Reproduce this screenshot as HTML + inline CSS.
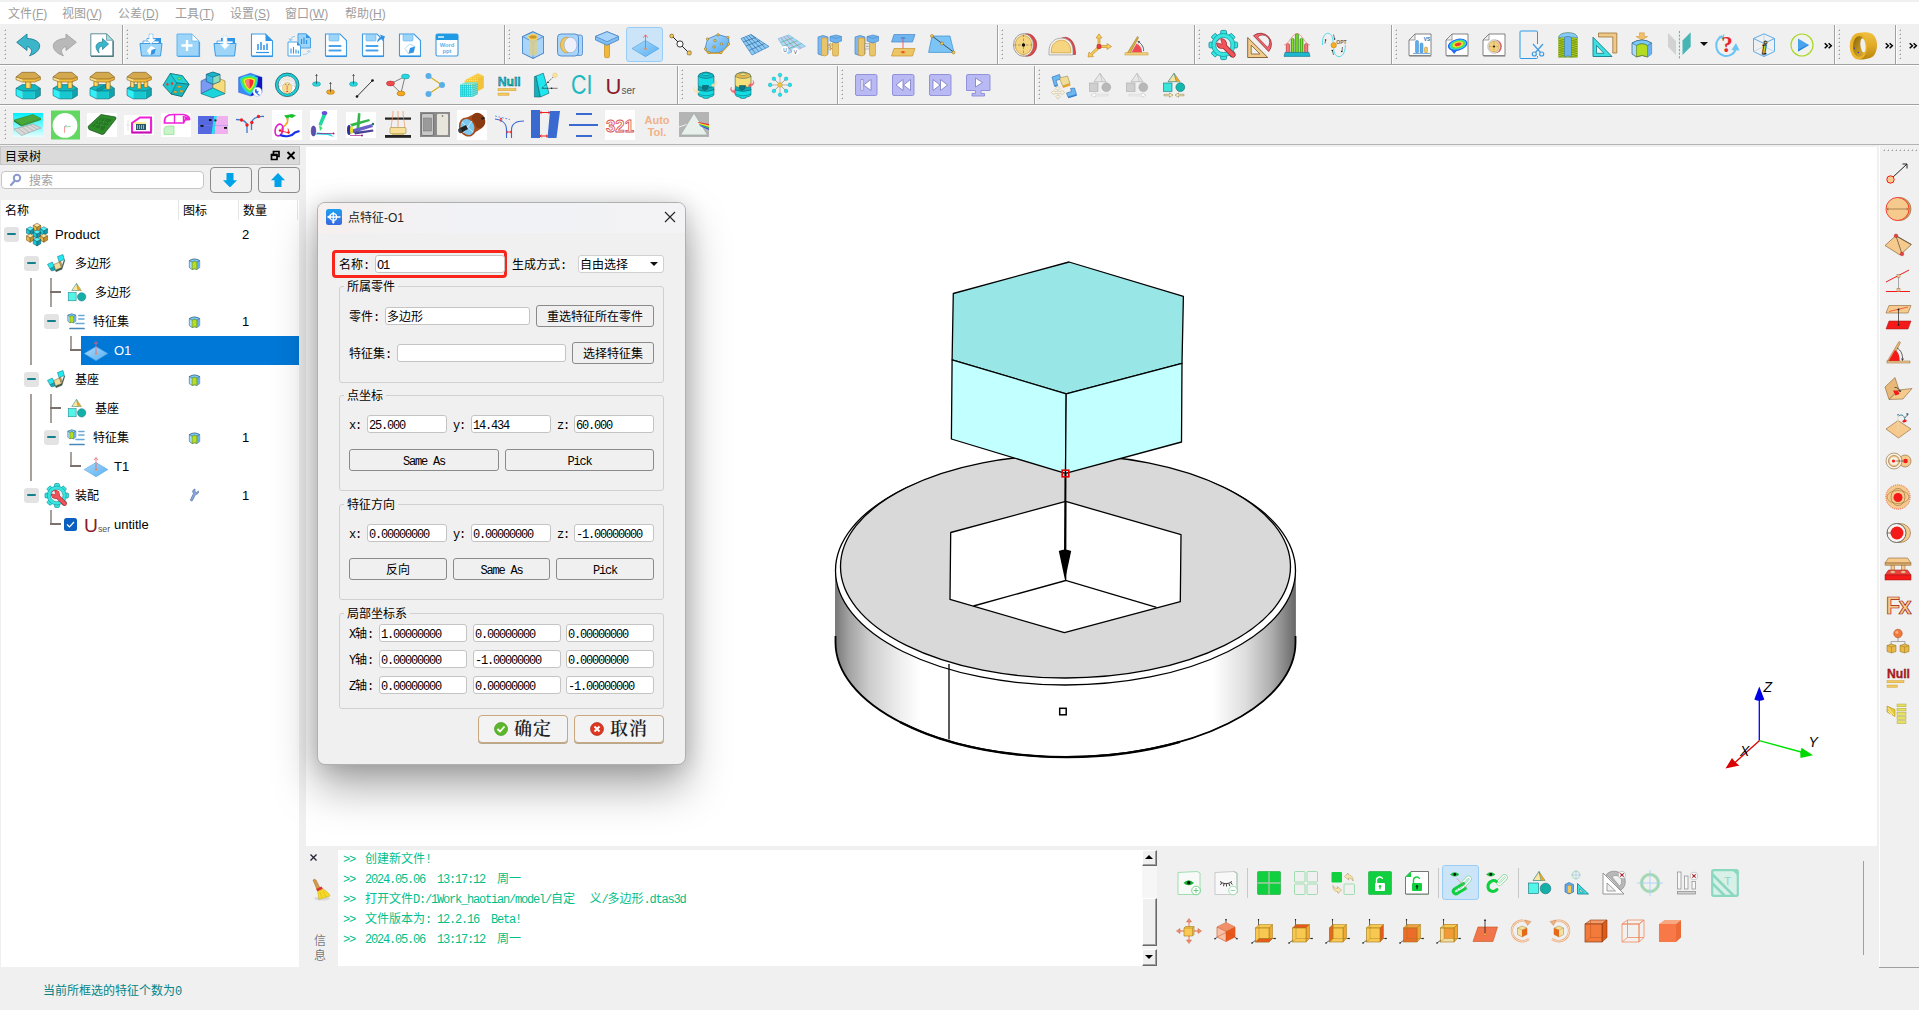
<!DOCTYPE html>
<html lang="zh"><head><meta charset="utf-8"><title>DTAS 3D</title>
<style>
*{box-sizing:border-box;margin:0;padding:0}
html,body{width:1919px;height:1010px;overflow:hidden}
body{background:#f0f0f0;font-family:"Liberation Sans","Noto Sans CJK SC",sans-serif;font-size:12px;color:#000;position:relative}
.abs{position:absolute}
.ui{font-family:"Liberation Sans","Noto Sans CJK SC",sans-serif;font-size:12px;line-height:16px;white-space:nowrap}
.ss{font-family:"Liberation Mono","Noto Sans CJK SC",monospace;font-size:12px;line-height:14px;white-space:nowrap;font-weight:400}
.ss b{font-weight:400;letter-spacing:-1.2px}
.hl{position:absolute;height:1px;left:0;width:1919px}
.ico{position:absolute;width:24px;height:24px;overflow:visible}
.inp{position:absolute;background:#fff;border:1px solid #c4c4c4;border-radius:3px;height:18px;padding:3px 0 0 1px;overflow:hidden}
.btn{position:absolute;background:#f0f0f0;border:1px solid #8a8a8a;border-radius:3px;text-align:center;height:22px;padding-top:5px}
.grp{position:absolute;border:1px solid #d0d0d0;border-radius:3px}
.grp>span{position:absolute;left:4px;top:-4px;line-height:10px;background:#f0f0f0;padding:0 3px}
.hd{position:absolute;width:3px}
.tb{position:absolute;width:15px;height:15px;border-radius:3px;background:#e3e3e3}
.tb:after{content:"";position:absolute;left:3px;top:6px;width:9px;height:2.4px;border-radius:1px;background:#14808c}
.tl{position:absolute;background:#a8a09c}
.th{position:absolute;background:#7c706c;height:2px}
</style></head><body>
<div class="abs" style="left:0;top:2px;width:1919px;height:22px;background:#fff"></div>
<div class="abs ui" style="left:8px;top:6px;color:#9d9d9d">文件(<u>F</u>)</div>
<div class="abs ui" style="left:62px;top:6px;color:#9d9d9d">视图(<u>V</u>)</div>
<div class="abs ui" style="left:118px;top:6px;color:#9d9d9d">公差(<u>D</u>)</div>
<div class="abs ui" style="left:175px;top:6px;color:#9d9d9d">工具(<u>T</u>)</div>
<div class="abs ui" style="left:230px;top:6px;color:#9d9d9d">设置(<u>S</u>)</div>
<div class="abs ui" style="left:285px;top:6px;color:#9d9d9d">窗口(<u>W</u>)</div>
<div class="abs ui" style="left:345px;top:6px;color:#9d9d9d">帮助(<u>H</u>)</div>
<div class="hl" style="top:64px;background:#a0a0a0"></div><div class="hl" style="top:65px;background:#fff"></div>
<div class="hl" style="top:104px;background:#a0a0a0"></div><div class="hl" style="top:105px;background:#fff"></div>
<div class="hl" style="top:144px;background:#b2b2b2"></div>
<i class="abs" style="left:5px;top:30px;width:1px;height:1px;background:#a0a0a0;box-shadow:-1px -1px 0 #fff,-1px 0 0 #cdcdcd,0 -1px 0 #cdcdcd"></i><i class="abs" style="left:5px;top:34px;width:1px;height:1px;background:#a0a0a0;box-shadow:-1px -1px 0 #fff,-1px 0 0 #cdcdcd,0 -1px 0 #cdcdcd"></i><i class="abs" style="left:5px;top:38px;width:1px;height:1px;background:#a0a0a0;box-shadow:-1px -1px 0 #fff,-1px 0 0 #cdcdcd,0 -1px 0 #cdcdcd"></i><i class="abs" style="left:5px;top:42px;width:1px;height:1px;background:#a0a0a0;box-shadow:-1px -1px 0 #fff,-1px 0 0 #cdcdcd,0 -1px 0 #cdcdcd"></i><i class="abs" style="left:5px;top:46px;width:1px;height:1px;background:#a0a0a0;box-shadow:-1px -1px 0 #fff,-1px 0 0 #cdcdcd,0 -1px 0 #cdcdcd"></i><i class="abs" style="left:5px;top:50px;width:1px;height:1px;background:#a0a0a0;box-shadow:-1px -1px 0 #fff,-1px 0 0 #cdcdcd,0 -1px 0 #cdcdcd"></i><i class="abs" style="left:5px;top:54px;width:1px;height:1px;background:#a0a0a0;box-shadow:-1px -1px 0 #fff,-1px 0 0 #cdcdcd,0 -1px 0 #cdcdcd"></i><i class="abs" style="left:5px;top:58px;width:1px;height:1px;background:#a0a0a0;box-shadow:-1px -1px 0 #fff,-1px 0 0 #cdcdcd,0 -1px 0 #cdcdcd"></i>
<svg class="ico" style="left:16px;top:33px;width:24px;height:24px" viewBox="0 0 24 24"><path d="M.7 9.3 L11 1 V5.500 C18 5.500 24 9 23.700 13 C23.500 17.500 19 21 13.500 22.800 C16.500 19 16.500 15.500 11 13.300 V17.500 Z" fill="#3ab5c9" stroke="#1f7f95" stroke-width=".9" stroke-linejoin="round"/></svg>
<svg class="ico" style="left:53px;top:33px;width:24px;height:24px" viewBox="0 0 24 24"><path d="M23.300 9.300 L13 1 V5.500 C6 5.500 0 9 .300 13 C.500 17.500 5 21 10.500 22.800 C7.500 19 7.500 15.500 13 13.300 V17.500 Z" fill="#b9b9b9" stroke="#a2a2a2" stroke-width=".9" stroke-linejoin="round"/></svg>
<svg class="ico" style="left:90px;top:33px;width:24px;height:24px" viewBox="0 0 24 24"><path d="M.8 .8 H16.500 L23 7.300 V23 H.8 Z" fill="#fff" stroke="#5d8d96" stroke-width="1"/><path d="M16.500 .8 V7.300 H23 Z" fill="#a5dfe4" stroke="#5d8d96" stroke-width=".7"/><path d="M23.200 8 V23.300 H1" fill="none" stroke="#4b7a83" stroke-width="1.200"/><path d="M18.500 11 L12.500 5.500 V9 C7 9 3 13 9 20 C8 15.500 9.500 13.300 12.500 13.300 V16.500 Z" fill="#3ab5c9" stroke="#1f7f95" stroke-width=".7"/></svg>
<div class="abs" style="left:122px;top:25px;width:1px;height:39px;background:#a0a0a0"></div><div class="abs" style="left:123px;top:25px;width:1px;height:39px;background:#fff"></div>
<i class="abs" style="left:127px;top:30px;width:1px;height:1px;background:#a0a0a0;box-shadow:-1px -1px 0 #fff,-1px 0 0 #cdcdcd,0 -1px 0 #cdcdcd"></i><i class="abs" style="left:127px;top:34px;width:1px;height:1px;background:#a0a0a0;box-shadow:-1px -1px 0 #fff,-1px 0 0 #cdcdcd,0 -1px 0 #cdcdcd"></i><i class="abs" style="left:127px;top:38px;width:1px;height:1px;background:#a0a0a0;box-shadow:-1px -1px 0 #fff,-1px 0 0 #cdcdcd,0 -1px 0 #cdcdcd"></i><i class="abs" style="left:127px;top:42px;width:1px;height:1px;background:#a0a0a0;box-shadow:-1px -1px 0 #fff,-1px 0 0 #cdcdcd,0 -1px 0 #cdcdcd"></i><i class="abs" style="left:127px;top:46px;width:1px;height:1px;background:#a0a0a0;box-shadow:-1px -1px 0 #fff,-1px 0 0 #cdcdcd,0 -1px 0 #cdcdcd"></i><i class="abs" style="left:127px;top:50px;width:1px;height:1px;background:#a0a0a0;box-shadow:-1px -1px 0 #fff,-1px 0 0 #cdcdcd,0 -1px 0 #cdcdcd"></i><i class="abs" style="left:127px;top:54px;width:1px;height:1px;background:#a0a0a0;box-shadow:-1px -1px 0 #fff,-1px 0 0 #cdcdcd,0 -1px 0 #cdcdcd"></i><i class="abs" style="left:127px;top:58px;width:1px;height:1px;background:#a0a0a0;box-shadow:-1px -1px 0 #fff,-1px 0 0 #cdcdcd,0 -1px 0 #cdcdcd"></i>
<svg class="ico" style="left:139px;top:33px;width:24px;height:24px" viewBox="0 0 24 24"><path d="M8 5 H22 V11 H8Z" fill="#2f93e6"/><path d="M4 8 H20 V13 H4Z" fill="#fff" stroke="#3d9be3" stroke-width=".8"/><path d="M1 10.5 H23 L21.5 23 H2.5 Z" fill="#9dd5f8" stroke="#3d9be3" stroke-width="1"/><path d="M10 1 H14 V6 H17 L12 11 L7 6 H10Z" fill="#fff" stroke="#7fc3f0" stroke-width=".7"/><path d="M12 13 L17 15.5 L15.5 21 L10.5 22 L8 17.5Z" fill="#fff"/><path d="M12.5 17 L17 15.5 L15.5 21 L11.5 22Z" fill="#2f93e6"/></svg>
<svg class="ico" style="left:176px;top:33px;width:24px;height:24px" viewBox="0 0 24 24"><path d="M1 1 H16 L23 8 V23 H1Z" fill="#9dd5f8" stroke="#62b4ef" stroke-width="1"/><path d="M16 1 V8 H23Z" fill="#fff" stroke="#62b4ef" stroke-width=".7"/><path d="M2 23.5 H23.5 V9" fill="none" stroke="#4aa6ec" stroke-width="1.2"/><path d="M11 7 V18 M5.5 12.5 H16.5" stroke="#fff" stroke-width="2.4"/></svg>
<svg class="ico" style="left:213px;top:33px;width:24px;height:24px" viewBox="0 0 24 24"><path d="M8 5 H22 V11 H8Z" fill="#2f93e6"/><path d="M4 8 H20 V13 H4Z" fill="#fff" stroke="#3d9be3" stroke-width=".8"/><path d="M1 10.5 H23 L21.5 23 H2.5 Z" fill="#9dd5f8" stroke="#3d9be3" stroke-width="1"/><path d="M10 3 H14 V11 H17 L12 16.5 L7 11 H10Z" fill="#fff" stroke="#bfe2fa" stroke-width=".7"/></svg>
<svg class="ico" style="left:250px;top:33px;width:24px;height:24px" viewBox="0 0 24 24"><path d="M1.5 1 H15.5 L22.5 8 V23 H1.5Z" fill="#fff" stroke="#3d9be3" stroke-width="1.1"/><path d="M15.5 1 V8 H22.5Z" fill="#2f93e6"/><path d="M2 23.4 H22.8" stroke="#2f93e6" stroke-width="1.3"/><path d="M8 11 V17 M11 9 V17 M14 12 V17 M17 10.5 V17" stroke="#2f93e6" stroke-width="1.5"/><path d="M6 19.5 H19" stroke="#2f93e6" stroke-width="1.2"/></svg>
<svg class="ico" style="left:287px;top:33px;width:24px;height:24px" viewBox="0 0 24 24"><path d="M11 .8 H19 L23.5 5 V15 H11Z" fill="#9dd5f8" stroke="#3d9be3" stroke-width=".9"/><path d="M19 .8 V5 H23.5Z" fill="#2f93e6"/><path d="M14.5 6 V11 M17 4.5 V11 M19.5 7 V11" stroke="#2f93e6" stroke-width="1.2"/><path d="M1 9 H10 L13.5 12.5 V23 H1Z" fill="#fff" stroke="#3d9be3" stroke-width=".9"/><path d="M10 9 V12.5 H13.5Z" fill="#2f93e6"/><path d="M4 15.5 V20.5 M6.500 14 V20.5 M9 16.5 V20.5 M11.3 17.500 V20.5" stroke="#2f93e6" stroke-width="1.1"/><path d="M8 3.500 C5 3.500 3.500 5 3.500 7.500 M2 5.500 L3.500 8 L5.500 6" fill="none" stroke="#7fc0f0" stroke-width=".9"/><path d="M16 21.500 C20 21.500 22 20 22 18 M23.500 19.500 L22 17.300 L20 19" fill="none" stroke="#9ccdf2" stroke-width=".9"/></svg>
<svg class="ico" style="left:324px;top:33px;width:24px;height:24px" viewBox="0 0 24 24"><path d="M1.5 1 H16 L22.5 7.5 V23 H1.5Z" fill="#fff" stroke="#3d9be3" stroke-width="1.1"/><path d="M5 1.5 H15 V7 Q15 8 14 8 H6 Q5 8 5 7Z" fill="#9dd5f8" stroke="#5eb0ee" stroke-width=".6"/><path d="M2 23.4 H22.8" stroke="#2f93e6" stroke-width="1.3"/><path d="M5.500 13 H16.500 M5.500 17.500 H16.500" stroke="#4aa3ea" stroke-width="2.200" stroke-linecap="round"/></svg>
<svg class="ico" style="left:361px;top:33px;width:24px;height:24px" viewBox="0 0 24 24"><path d="M1.5 1 H16 L22.5 7.5 V23 H1.5Z" fill="#fff" stroke="#3d9be3" stroke-width="1.1"/><path d="M5 1.5 H15 V7 Q15 8 14 8 H6 Q5 8 5 7Z" fill="#9dd5f8" stroke="#5eb0ee" stroke-width=".6"/><path d="M2 23.4 H22.8" stroke="#2f93e6" stroke-width="1.3"/><path d="M5.500 13 H16.500 M5.500 17.500 H16.500" stroke="#4aa3ea" stroke-width="2.200" stroke-linecap="round"/><path d="M16 9.500 C16.500 6 18 4.500 20 4 L19 1.500 L24 3.500 L22 8.500 L21 6 C19 6.500 17.500 8 16 9.500Z" fill="#2f93e6"/></svg>
<svg class="ico" style="left:398px;top:33px;width:24px;height:24px" viewBox="0 0 24 24"><path d="M1.5 1 H16 L22.5 7.5 V23 H1.5Z" fill="#fff" stroke="#3d9be3" stroke-width="1.1"/><path d="M5 1.5 H15 V7 Q15 8 14 8 H6 Q5 8 5 7Z" fill="#9dd5f8" stroke="#5eb0ee" stroke-width=".6"/><path d="M2 23.4 H22.8" stroke="#2f93e6" stroke-width="1.3"/><path d="M11.500 11 L17 13.500 L15.500 19.500 L10 20.500 L7 15.500Z" fill="#fff" stroke="#6bb6ee" stroke-width=".5"/><path d="M12 15 L17 13.500 L15.500 19.500 L10.500 20.500Z" fill="#2f93e6"/></svg>
<svg class="ico" style="left:435px;top:33px;width:24px;height:24px" viewBox="0 0 24 24"><rect x="1" y="1" width="22" height="22" rx="1.5" fill="#fff" stroke="#3d9be3" stroke-width="1.1"/><path d="M1 2.5 Q1 1 2.5 1 H21.500 Q23 1 23 2.500 V7 H1Z" fill="#1f9be3"/><path d="M3 4 H9" stroke="#fff" stroke-width="1.300"/><text x="12" y="13.500" font-family="Liberation Sans,sans-serif" font-size="5.800" font-weight="bold" fill="#5db2ee" text-anchor="middle">Word</text><text x="12" y="19.500" font-family="Liberation Sans,sans-serif" font-size="5.800" font-weight="bold" fill="#5db2ee" text-anchor="middle">ppt</text></svg>
<div class="abs" style="left:504px;top:25px;width:1px;height:39px;background:#a0a0a0"></div><div class="abs" style="left:505px;top:25px;width:1px;height:39px;background:#fff"></div>
<i class="abs" style="left:509px;top:30px;width:1px;height:1px;background:#a0a0a0;box-shadow:-1px -1px 0 #fff,-1px 0 0 #cdcdcd,0 -1px 0 #cdcdcd"></i><i class="abs" style="left:509px;top:34px;width:1px;height:1px;background:#a0a0a0;box-shadow:-1px -1px 0 #fff,-1px 0 0 #cdcdcd,0 -1px 0 #cdcdcd"></i><i class="abs" style="left:509px;top:38px;width:1px;height:1px;background:#a0a0a0;box-shadow:-1px -1px 0 #fff,-1px 0 0 #cdcdcd,0 -1px 0 #cdcdcd"></i><i class="abs" style="left:509px;top:42px;width:1px;height:1px;background:#a0a0a0;box-shadow:-1px -1px 0 #fff,-1px 0 0 #cdcdcd,0 -1px 0 #cdcdcd"></i><i class="abs" style="left:509px;top:46px;width:1px;height:1px;background:#a0a0a0;box-shadow:-1px -1px 0 #fff,-1px 0 0 #cdcdcd,0 -1px 0 #cdcdcd"></i><i class="abs" style="left:509px;top:50px;width:1px;height:1px;background:#a0a0a0;box-shadow:-1px -1px 0 #fff,-1px 0 0 #cdcdcd,0 -1px 0 #cdcdcd"></i><i class="abs" style="left:509px;top:54px;width:1px;height:1px;background:#a0a0a0;box-shadow:-1px -1px 0 #fff,-1px 0 0 #cdcdcd,0 -1px 0 #cdcdcd"></i><i class="abs" style="left:509px;top:58px;width:1px;height:1px;background:#a0a0a0;box-shadow:-1px -1px 0 #fff,-1px 0 0 #cdcdcd,0 -1px 0 #cdcdcd"></i>
<div class="abs" style="left:626px;top:27px;width:37px;height:35px;background:#cce4f7;border:1px solid #99cdf5;border-radius:3px"></div>
<svg class="ico" style="left:521px;top:33px;width:24px;height:24px" viewBox="0 0 24 24"><g transform="translate(0 -2.300) scale(1 1.180)"><path d="M12 .8 L22.500 5 V19 L12 23.500 L1.500 19 V5Z" fill="#a9d5fa" stroke="#4a86c8" stroke-width=".9"/><path d="M1.500 5 L12 9.500 L22.500 5 M12 9.500 V23.500" fill="none" stroke="#4a86c8" stroke-width=".7"/><path d="M8 5.500 V20 Q12 22.500 16 20 V5.500Z" fill="#d9cf8e" opacity=".85"/><ellipse cx="12" cy="5.300" rx="4.300" ry="2.100" fill="#c99a2a" stroke="#f2d061" stroke-width="1.300"/></g></svg>
<svg class="ico" style="left:558px;top:33px;width:24px;height:24px" viewBox="0 0 24 24"><rect x="18" y="2" width="6.500" height="20.500" rx="2" fill="#a9d5fa" stroke="#4a86c8" stroke-width=".8"/><rect x="-.500" y="1" width="21" height="22" rx="3.500" fill="#a9d5fa" stroke="#4a86c8" stroke-width=".9"/><ellipse cx="8.500" cy="12" rx="6" ry="7.800" fill="#f3c95c" stroke="#c8922a" stroke-width=".7"/><ellipse cx="12.500" cy="12" rx="6.500" ry="7.800" fill="#eef1fb" stroke="#8aa0c8" stroke-width=".6"/></svg>
<svg class="ico" style="left:595px;top:33px;width:24px;height:24px" viewBox="0 0 24 24"><g transform="translate(0 -2.500) scale(1 1.180)"><rect x="9.500" y="10" width="5" height="13" rx="1.200" fill="#f0b93a" stroke="#c8922a" stroke-width=".7"/><path d="M12 1 L23.500 5 V8 L12 12.500 L.500 8 V5Z" fill="#7fbdf2" stroke="#4a86c8" stroke-width=".8"/><path d="M12 1 L23.500 5 L12 9.500 L.500 5Z" fill="#a9d5fa" stroke="#4a86c8" stroke-width=".7"/></g></svg>
<svg class="ico" style="left:632px;top:33px;width:24px;height:24px" viewBox="0 0 24 24"><defs><linearGradient id="gp" x1="0" y1="0" x2="1" y2="1"><stop offset="0" stop-color="#a9d9fa"/><stop offset="1" stop-color="#58b0f2"/></linearGradient></defs><path d="M13.500 7.500 L27 15.500 L13.500 23.700 L0 15.500Z" fill="url(#gp)" stroke="#4a9ee0" stroke-width=".6"/><path d="M13.500 15.500 V2 M11.300 4.600 L13.500 1.800 L15.700 4.600" fill="none" stroke="#f0606c" stroke-width=".9"/><ellipse cx="13.500" cy="15.700" rx="1.400" ry="1" fill="#ee8a5a"/></svg>
<svg class="ico" style="left:669px;top:33px;width:24px;height:24px" viewBox="0 0 24 24"><path d="M2.500 2.500 L20.500 20.500" stroke="#222" stroke-width="1"/><circle cx="11" cy="11" r="3.100" fill="#fff" stroke="#222" stroke-width=".9"/><circle cx="2.700" cy="3" r="1.900" fill="#f3c95c" stroke="#6b4d10" stroke-width=".6"/><rect x="18.300" y="18" width="3.800" height="3.800" rx=".8" fill="#f3c95c" stroke="#6b4d10" stroke-width=".6"/></svg>
<svg class="ico" style="left:706px;top:33px;width:24px;height:24px" viewBox="0 0 24 24"><defs><linearGradient id="gq" x1="0" y1="0" x2="1" y2="1"><stop offset="0" stop-color="#b5dcfa"/><stop offset="1" stop-color="#4fa9ef"/></linearGradient></defs><path d="M-1 16 L1.500 6 L12 1.500 L22.500 4.500 L23 11 L15 19.500 L2 19.500Z" fill="url(#gq)" stroke="#3a7fc0" stroke-width=".8"/><path d="M-1 16 L2 19.500 L15 19.500 L23 11 V12.500 L15 21 L2 21 L-1 17.500Z" fill="#d8a83a"/><g fill="#f3c95c" stroke="#8a6414" stroke-width=".5"><circle cx="-.5" cy="16" r="1.200"/><circle cx="1.500" cy="6" r="1.200"/><circle cx="12" cy="1.800" r="1.200"/><circle cx="22" cy="4.500" r="1.200"/><circle cx="22.500" cy="11" r="1.200"/><circle cx="15" cy="19.500" r="1.200"/><circle cx="3" cy="19.500" r="1.200"/><circle cx="9" cy="7.500" r="1.200"/><circle cx="15.500" cy="11" r="1.200"/><circle cx="8" cy="14" r="1.200"/></g></svg>
<svg class="ico" style="left:743px;top:33px;width:24px;height:24px" viewBox="0 0 24 24"><path d="M-2 5.500 L8 1.500 L26 13.500 L9 22Z" fill="#8ccbf6" stroke="#3a7fc0" stroke-width=".7"/><path d="M.500 4.500 L12.400 20.300 M3 3.500 L15.800 18.600 M5.500 2.500 L19.200 16.900 M8 1.500 L22.600 15.200 M.200 9 L12.500 4.500 M2.900 13 L17 7.500 M6 17.500 L21.500 10.500" fill="none" stroke="#2a5a8e" stroke-width=".6"/></svg>
<svg class="ico" style="left:780px;top:33px;width:24px;height:24px" viewBox="0 0 24 24"><path d="M-2 5.800 L8.800 1.800 L25.700 13.300 L8 20.700Z" fill="#a9d9f8" stroke="#6aaee0" stroke-width=".5"/><path d="M1 4.700 L12 19 M4 3.600 L16.500 17.200 M6.500 2.700 L21 15.300" fill="none" stroke="#d85a6a" stroke-width=".5"/><path d="M.500 9.500 L13 4.700 M3 13.300 L17.500 7.700 M5.500 17 L21.500 10.500" fill="none" stroke="#3aa860" stroke-width=".5"/><circle cx="5" cy="16.500" r="3.400" fill="#fff"/><circle cx="15.500" cy="18.500" r="3.400" fill="#fff"/><text x="5" y="18.500" font-size="5" font-family="Liberation Sans,sans-serif" text-anchor="middle" fill="#444">U</text><text x="15.500" y="20.500" font-size="5" font-family="Liberation Sans,sans-serif" text-anchor="middle" fill="#444">V</text></svg>
<svg class="ico" style="left:817px;top:33px;width:24px;height:24px" viewBox="0 0 24 24"><path d="M1 4 Q6 1 11 4 V21 Q6 24 1 21Z" fill="#7db8ee" stroke="#4a86c8" stroke-width=".7"/><path d="M4.500 5.500 Q7.500 4 10.500 5.500 V22 Q7.500 24 4.500 22Z" fill="#e8c46a" stroke="#c8922a" stroke-width=".6"/><rect x="15.500" y="9" width="6" height="14" rx="1.500" fill="#e8c46a" stroke="#c8922a" stroke-width=".6"/><path d="M13 3.500 L19 2 L24.500 3.500 V8 L19 10 L13 8Z" fill="#6fb4ee" stroke="#4a86c8" stroke-width=".7"/><path d="M13 3.500 L19 5.500 L24.500 3.500" fill="none" stroke="#4a86c8" stroke-width=".6"/><path d="M11 12 H15 M11 15.500 H15" stroke="#c89a50" stroke-width="1.400"/><path d="M13 10 L16 12 L13 14Z M13.500 13.500 L10.500 15.500 L13.500 17.500Z" fill="#f1d9a0" stroke="#a37a30" stroke-width=".4"/></svg>
<svg class="ico" style="left:854px;top:33px;width:24px;height:24px" viewBox="0 0 24 24"><path d="M1 4 Q6 1 11 4 V21 Q6 24 1 21Z" fill="#7db8ee" stroke="#4a86c8" stroke-width=".7"/><path d="M4.500 5.500 Q7.500 4 10.500 5.500 V22 Q7.500 24 4.500 22Z" fill="#e8c46a" stroke="#c8922a" stroke-width=".6"/><rect x="15.500" y="9" width="6" height="14" rx="1.500" fill="#e8c46a" stroke="#c8922a" stroke-width=".6"/><path d="M13 3.500 L19 2 L24.500 3.500 V8 L19 10 L13 8Z" fill="#6fb4ee" stroke="#4a86c8" stroke-width=".7"/><path d="M13 3.500 L19 5.500 L24.500 3.500" fill="none" stroke="#4a86c8" stroke-width=".6"/><rect x="11" y="10.500" width="4.500" height="5.500" fill="#e8e8e8" stroke="#8a8a8a" stroke-width=".5"/><path d="M12 13.300 H14.500" stroke="#666" stroke-width=".6"/></svg>
<svg class="ico" style="left:891px;top:33px;width:24px;height:24px" viewBox="0 0 24 24"><path d="M3 1.500 H24 L21.500 9 H.500Z" fill="#6fb6f0" stroke="#4a86c8" stroke-width=".7"/><ellipse cx="12" cy="5" rx="2.500" ry="1.100" fill="#4a8fd8"/><path d="M12 5.500 V19" stroke="#ef5561" stroke-width=".9"/><path d="M3 15.500 H24 L21.500 23 H.500Z" fill="#ecc565" stroke="#c8922a" stroke-width=".7"/><ellipse cx="12" cy="19.300" rx="2.600" ry="1.200" fill="#ef8a3a"/><circle cx="12" cy="19" r=".9" fill="#e23a3a"/></svg>
<svg class="ico" style="left:928px;top:33px;width:24px;height:24px" viewBox="0 0 24 24"><path d="M4 3 H22 L26 19.400 H.600Z" fill="#7cc4f5" stroke="#3a8fd0" stroke-width=".7"/><path d="M4 3 L25.500 19" stroke="#333" stroke-width=".8"/><g fill="#f3c95c" stroke="#8a6414" stroke-width=".5"><circle cx="4" cy="3" r="1.500"/><circle cx="14" cy="10.500" r="1.500"/><circle cx="25.500" cy="19.400" r="1.500"/></g></svg>
<div class="abs" style="left:997px;top:25px;width:1px;height:39px;background:#a0a0a0"></div><div class="abs" style="left:998px;top:25px;width:1px;height:39px;background:#fff"></div>
<i class="abs" style="left:1002px;top:30px;width:1px;height:1px;background:#a0a0a0;box-shadow:-1px -1px 0 #fff,-1px 0 0 #cdcdcd,0 -1px 0 #cdcdcd"></i><i class="abs" style="left:1002px;top:34px;width:1px;height:1px;background:#a0a0a0;box-shadow:-1px -1px 0 #fff,-1px 0 0 #cdcdcd,0 -1px 0 #cdcdcd"></i><i class="abs" style="left:1002px;top:38px;width:1px;height:1px;background:#a0a0a0;box-shadow:-1px -1px 0 #fff,-1px 0 0 #cdcdcd,0 -1px 0 #cdcdcd"></i><i class="abs" style="left:1002px;top:42px;width:1px;height:1px;background:#a0a0a0;box-shadow:-1px -1px 0 #fff,-1px 0 0 #cdcdcd,0 -1px 0 #cdcdcd"></i><i class="abs" style="left:1002px;top:46px;width:1px;height:1px;background:#a0a0a0;box-shadow:-1px -1px 0 #fff,-1px 0 0 #cdcdcd,0 -1px 0 #cdcdcd"></i><i class="abs" style="left:1002px;top:50px;width:1px;height:1px;background:#a0a0a0;box-shadow:-1px -1px 0 #fff,-1px 0 0 #cdcdcd,0 -1px 0 #cdcdcd"></i><i class="abs" style="left:1002px;top:54px;width:1px;height:1px;background:#a0a0a0;box-shadow:-1px -1px 0 #fff,-1px 0 0 #cdcdcd,0 -1px 0 #cdcdcd"></i><i class="abs" style="left:1002px;top:58px;width:1px;height:1px;background:#a0a0a0;box-shadow:-1px -1px 0 #fff,-1px 0 0 #cdcdcd,0 -1px 0 #cdcdcd"></i>
<svg class="ico" style="left:1013px;top:33px;width:24px;height:24px" viewBox="0 0 24 24"><ellipse cx="14" cy="12" rx="9.700" ry="11.300" fill="#e0464a" stroke="#9a2428" stroke-width=".6"/><ellipse cx="10.500" cy="12" rx="10" ry="11.300" fill="#f7f2e6" stroke="#777" stroke-width=".7"/><ellipse cx="10.500" cy="12" rx="8.300" ry="9.500" fill="#f5d580" stroke="#c8922a" stroke-width=".7"/><path d="M10.500 1.500 V22.500 M1 12 H20" stroke="#8a6a20" stroke-width=".6" stroke-dasharray="2.500 1.500"/><circle cx="10.500" cy="12" r="1.700" fill="#111"/></svg>
<svg class="ico" style="left:1050px;top:33px;width:24px;height:24px" viewBox="0 0 24 24"><g transform="translate(0 3) scale(1 .840)"><path d="M5 22 V15 C5 5 12 1.500 16 1.500 C22 3 25.500 10 25.500 22Z" fill="#e0464a" stroke="#9a2428" stroke-width=".6"/><path d="M-1 22.500 V18 C-1 8 5 2.500 11.500 2.500 C18 2.500 23 8 23 18 V22.500Z" fill="#f7f4ee" stroke="#8a8a8a" stroke-width=".7"/><path d="M1.200 20 V18 C1.200 10 6 5 11.500 5 C17 5 20.800 10 20.800 18 V20Z" fill="#f5d580" stroke="#c8922a" stroke-width=".7"/></g></svg>
<svg class="ico" style="left:1087px;top:33px;width:24px;height:24px" viewBox="0 0 24 24"><path d="M11 13.500 V5 H9 L12 .800 L15 5 H13 V12.500 L20 12.500 V10.500 L24.500 13.500 L20 16.500 V14.500 H13.500 L5 22 L6.500 23.500 L1 24 L2 19 L3.500 20.500Z" fill="#f3c95c" stroke="#c8922a" stroke-width=".7" stroke-linejoin="round"/><rect x="10" y="11.500" width="4" height="4" rx=".8" fill="#ee3a44" stroke="#a01c24" stroke-width=".5"/></svg>
<svg class="ico" style="left:1124px;top:33px;width:24px;height:24px" viewBox="0 0 24 24"><path d="M3 20.500 L13.500 3.500 L14.500 4.500 L6 20.500Z" fill="#d9b23a" stroke="#8a6a14" stroke-width=".5"/><path d="M7.500 19.500 L12.500 10.500 C16 12 18 15 18 19.500Z" fill="#f04a54"/><path d="M14 8.500 C18 11 20 14.500 19.500 18 M13.500 8.300 L15.500 8.500 L14.500 10.300" fill="none" stroke="#222" stroke-width=".7"/><rect x="1" y="19.800" width="23" height="2.200" fill="#f3d27a" stroke="#c8922a" stroke-width=".5"/></svg>
<div class="abs" style="left:1194px;top:25px;width:1px;height:39px;background:#a0a0a0"></div><div class="abs" style="left:1195px;top:25px;width:1px;height:39px;background:#fff"></div>
<i class="abs" style="left:1199px;top:30px;width:1px;height:1px;background:#a0a0a0;box-shadow:-1px -1px 0 #fff,-1px 0 0 #cdcdcd,0 -1px 0 #cdcdcd"></i><i class="abs" style="left:1199px;top:34px;width:1px;height:1px;background:#a0a0a0;box-shadow:-1px -1px 0 #fff,-1px 0 0 #cdcdcd,0 -1px 0 #cdcdcd"></i><i class="abs" style="left:1199px;top:38px;width:1px;height:1px;background:#a0a0a0;box-shadow:-1px -1px 0 #fff,-1px 0 0 #cdcdcd,0 -1px 0 #cdcdcd"></i><i class="abs" style="left:1199px;top:42px;width:1px;height:1px;background:#a0a0a0;box-shadow:-1px -1px 0 #fff,-1px 0 0 #cdcdcd,0 -1px 0 #cdcdcd"></i><i class="abs" style="left:1199px;top:46px;width:1px;height:1px;background:#a0a0a0;box-shadow:-1px -1px 0 #fff,-1px 0 0 #cdcdcd,0 -1px 0 #cdcdcd"></i><i class="abs" style="left:1199px;top:50px;width:1px;height:1px;background:#a0a0a0;box-shadow:-1px -1px 0 #fff,-1px 0 0 #cdcdcd,0 -1px 0 #cdcdcd"></i><i class="abs" style="left:1199px;top:54px;width:1px;height:1px;background:#a0a0a0;box-shadow:-1px -1px 0 #fff,-1px 0 0 #cdcdcd,0 -1px 0 #cdcdcd"></i><i class="abs" style="left:1199px;top:58px;width:1px;height:1px;background:#a0a0a0;box-shadow:-1px -1px 0 #fff,-1px 0 0 #cdcdcd,0 -1px 0 #cdcdcd"></i>
<svg class="ico" style="left:1209px;top:31px;width:28px;height:28px" viewBox="0 0 24 24"><g fill="#38e6e0" stroke="#0f8e9a" stroke-width=".7"><rect x="10" y="-.5" width="5" height="5" rx="1"/><rect x="10" y="19.500" width="5" height="5" rx="1"/><rect x="0" y="9.500" width="5" height="5" rx="1"/><rect x="19.500" y="9.500" width="5" height="5" rx="1"/><rect x="2.800" y="2.800" width="5" height="5" rx="1" transform="rotate(45 5.300 5.300)"/><rect x="16.500" y="2.800" width="5" height="5" rx="1" transform="rotate(45 19 5.300)"/><rect x="2.800" y="16.500" width="5" height="5" rx="1" transform="rotate(45 5.300 19)"/><rect x="16.500" y="16.500" width="5" height="5" rx="1" transform="rotate(45 19 19)"/></g><circle cx="12.300" cy="12" r="8.200" fill="#f0f0f0" stroke="#38e6e0" stroke-width="3.400"/><circle cx="12.300" cy="12" r="9.900" fill="none" stroke="#0f8e9a" stroke-width=".6"/><circle cx="12.300" cy="12" r="6.500" fill="none" stroke="#0f8e9a" stroke-width=".6"/><path d="M13 13 L20.500 20.500" stroke="#a01c24" stroke-width="4.600" stroke-linecap="round"/><circle cx="10.800" cy="10.800" r="4.500" fill="#a01c24"/><path d="M13 13 L20.500 20.500" stroke="#f0545a" stroke-width="3.500" stroke-linecap="round"/><circle cx="10.800" cy="10.800" r="3.900" fill="#f0545a"/><path d="M11.300 11.300 L6.200 10 L9.800 6.400Z" fill="#f0f0f0"/><path d="M6.800 10.200 L11.300 11.300 L10 6.800" fill="none" stroke="#a01c24" stroke-width=".5"/></svg>
<svg class="ico" style="left:1247px;top:33px;width:24px;height:24px" viewBox="0 0 24 24"><path d="M6.500 2.700 A11 11 0 0 1 21.700 18.500Z" fill="#f8646a" stroke="#7a1c24" stroke-width=".7" stroke-linejoin="round"/><path d="M10.500 4 A7.200 7.200 0 0 1 20.500 14.400Z" fill="#f0f0f0" stroke="#7a1c24" stroke-width=".6" stroke-linejoin="round"/><path d="M.700 4.500 L20.800 24.500 H.700Z" fill="#f3cc8c" stroke="#6a4a1c" stroke-width=".8" stroke-linejoin="round"/><path d="M4.200 12.200 L13 21 H4.200Z" fill="#f0f0f0" stroke="#6a4a1c" stroke-width=".7"/></svg>
<svg class="ico" style="left:1284px;top:33px;width:24px;height:24px" viewBox="0 0 24 24"><path d="M0 12 C5 11.500 8 .500 13 .500 C18 .500 21 11.500 26 12" fill="none" stroke="#f06a6a" stroke-width=".6"/><defs><linearGradient id="hg" x1="0" y1="0" x2="1" y2="0"><stop offset="0" stop-color="#3aa818"/><stop offset=".5" stop-color="#8ae02a"/><stop offset="1" stop-color="#3aa818"/></linearGradient><linearGradient id="hr" x1="0" y1="0" x2="1" y2="0"><stop offset="0" stop-color="#e84a4a"/><stop offset=".5" stop-color="#f88a8a"/><stop offset="1" stop-color="#e84a4a"/></linearGradient></defs><g stroke-width=".4"><rect x="2.200" y="10.500" width="3.400" height="10.500" rx="1.500" fill="url(#hr)" stroke="#a02a2a"/><rect x="7" y="5.300" width="3.200" height="15.500" rx="1.500" fill="url(#hg)" stroke="#2a7a14"/><rect x="11.300" y=".700" width="3.300" height="20" rx="1.500" fill="url(#hg)" stroke="#2a7a14"/><rect x="15.900" y="5.300" width="3.200" height="15.500" rx="1.500" fill="url(#hg)" stroke="#2a7a14"/><rect x="20.500" y="10.500" width="3.400" height="10.500" rx="1.500" fill="url(#hr)" stroke="#a02a2a"/></g><path d="M1 19.400 H25 L26 23.400 H0Z" fill="#1cb8d0" stroke="#0f6e8a" stroke-width=".6"/></svg>
<svg class="ico" style="left:1321px;top:33px;width:24px;height:24px" viewBox="0 0 24 24"><path d="M12 9 C12 3 9.500 .300 6.700 .300 C3 .300 1 6 1.500 12 M12.600 15.500 C13 21 15.500 23.700 18 23.700 C22 23.700 24.600 18 24.300 12" fill="none" stroke="#4adcec" stroke-width="1"/><circle cx="12.700" cy="12.200" r="2.700" fill="#f5b020" stroke="#b87a10" stroke-width=".5"/><text x="15.300" y="11.300" font-size="5" font-family="Liberation Sans,sans-serif" font-weight="bold" fill="#666">OPT</text><path d="M4 10.500 L4.500 7.500 M12.500 1.500 L13.500 5.500 M11.500 18 L12.500 22 M21.500 14 L21 18" fill="none" stroke="#222" stroke-width=".6"/><circle cx="4.600" cy="7" r=".8" fill="#111"/><circle cx="13.600" cy="6" r=".8" fill="#111"/><circle cx="11.300" cy="17.500" r=".8" fill="#111"/><circle cx="20.800" cy="18.500" r=".8" fill="#111"/></svg>
<div class="abs" style="left:1391px;top:25px;width:1px;height:39px;background:#a0a0a0"></div><div class="abs" style="left:1392px;top:25px;width:1px;height:39px;background:#fff"></div>
<i class="abs" style="left:1396px;top:30px;width:1px;height:1px;background:#a0a0a0;box-shadow:-1px -1px 0 #fff,-1px 0 0 #cdcdcd,0 -1px 0 #cdcdcd"></i><i class="abs" style="left:1396px;top:34px;width:1px;height:1px;background:#a0a0a0;box-shadow:-1px -1px 0 #fff,-1px 0 0 #cdcdcd,0 -1px 0 #cdcdcd"></i><i class="abs" style="left:1396px;top:38px;width:1px;height:1px;background:#a0a0a0;box-shadow:-1px -1px 0 #fff,-1px 0 0 #cdcdcd,0 -1px 0 #cdcdcd"></i><i class="abs" style="left:1396px;top:42px;width:1px;height:1px;background:#a0a0a0;box-shadow:-1px -1px 0 #fff,-1px 0 0 #cdcdcd,0 -1px 0 #cdcdcd"></i><i class="abs" style="left:1396px;top:46px;width:1px;height:1px;background:#a0a0a0;box-shadow:-1px -1px 0 #fff,-1px 0 0 #cdcdcd,0 -1px 0 #cdcdcd"></i><i class="abs" style="left:1396px;top:50px;width:1px;height:1px;background:#a0a0a0;box-shadow:-1px -1px 0 #fff,-1px 0 0 #cdcdcd,0 -1px 0 #cdcdcd"></i><i class="abs" style="left:1396px;top:54px;width:1px;height:1px;background:#a0a0a0;box-shadow:-1px -1px 0 #fff,-1px 0 0 #cdcdcd,0 -1px 0 #cdcdcd"></i><i class="abs" style="left:1396px;top:58px;width:1px;height:1px;background:#a0a0a0;box-shadow:-1px -1px 0 #fff,-1px 0 0 #cdcdcd,0 -1px 0 #cdcdcd"></i>
<svg class="ico" style="left:1408px;top:33px;width:24px;height:24px" viewBox="0 0 24 24"><path d="M7 1 H23 V22.500 H1 V7Z" fill="#fff" stroke="#666" stroke-width=".8"/><path d="M7 1 V7 H1Z" fill="#eee" stroke="#666" stroke-width=".6"/><path d="M1.500 23.300 H23.300" stroke="#999" stroke-width=".9"/><g stroke="#2f6fae" stroke-width=".4"><rect x="7.500" y="7.500" width="3" height="12.500" rx="1.200" fill="#5aaef0"/><rect x="12" y="10" width="3" height="10" rx="1.200" fill="#5aaef0"/><rect x="16.500" y="14" width="3" height="6" rx="1.200" fill="#f3c95c" stroke="#a37a20"/></g><path d="M5 20.500 H22" stroke="#7ab0e0" stroke-width="1.200"/><text x="19" y="7.500" font-size="4.800" font-weight="bold" font-family="Liberation Sans,sans-serif" fill="#2f6fae" text-anchor="middle">VS</text></svg>
<svg class="ico" style="left:1445px;top:33px;width:24px;height:24px" viewBox="0 0 24 24"><path d="M7 1 H23 V22.500 H1 V7Z" fill="#fff" stroke="#666" stroke-width=".8"/><path d="M7 1 V7 H1Z" fill="#eee" stroke="#666" stroke-width=".6"/><path d="M1.500 23.300 H23.300" stroke="#999" stroke-width=".9"/><g transform="rotate(-14 12.500 12)"><path d="M3.500 12 L7 20 Q10 17.500 12 16.500Z" fill="#2a6af0"/><ellipse cx="12.700" cy="11.800" rx="10" ry="5.800" fill="#2a6af0"/><ellipse cx="12.900" cy="11.700" rx="8.600" ry="4.800" fill="#28d8e8"/><ellipse cx="13" cy="11.600" rx="7.200" ry="3.900" fill="#62e03a"/><ellipse cx="13.100" cy="11.500" rx="5.400" ry="2.800" fill="#f5e030"/><ellipse cx="13.200" cy="11.500" rx="3.400" ry="1.600" fill="#f03838"/></g></svg>
<svg class="ico" style="left:1482px;top:33px;width:24px;height:24px" viewBox="0 0 24 24"><path d="M7 1 H23 V22.500 H1 V7Z" fill="#fff" stroke="#666" stroke-width=".8"/><path d="M7 1 V7 H1Z" fill="#eee" stroke="#666" stroke-width=".6"/><path d="M1.500 23.300 H23.300" stroke="#999" stroke-width=".9"/><ellipse cx="13.500" cy="13.500" rx="6.300" ry="6.800" fill="#d8565a"/><ellipse cx="12" cy="13.500" rx="6.300" ry="6.800" fill="#eee" stroke="#999" stroke-width=".5"/><ellipse cx="12" cy="13.500" rx="5" ry="5.500" fill="#f3d080" stroke="#c8922a" stroke-width=".5"/><path d="M12 8 V19 M7 13.500 H17" stroke="#8a6a20" stroke-width=".4" stroke-dasharray="1.500 1"/><circle cx="12" cy="13.500" r="1" fill="#111"/></svg>
<svg class="ico" style="left:1519px;top:33px;width:24px;height:24px" viewBox="0 0 24 24"><path d="M18.500 11 V-1 Q18.500 -2 17.500 -2 H2 Q1 -2 1 -1 V24.500 Q1 25.500 2 25.500 H17.500 Q18.500 25.500 18.500 24.500 V23" fill="none" stroke="#2a9ae8" stroke-width="1"/><path d="M14 11 L21.500 19.500 M24 11 L16.500 19.500" stroke="#3d9be3" stroke-width="1.200"/><circle cx="15.300" cy="21" r="2" fill="none" stroke="#3d9be3" stroke-width="1.200"/><circle cx="22.700" cy="21" r="2" fill="none" stroke="#3d9be3" stroke-width="1.200"/></svg>
<svg class="ico" style="left:1556px;top:33px;width:24px;height:24px" viewBox="0 0 24 24"><path d="M2.600 5 Q2.600 0 12 -.300 Q21.400 0 21.400 5 V24.300 H2.600Z" fill="#b8d820" stroke="#6a8a10" stroke-width=".5"/><path d="M3 5.500 L8.2 6.65 L3 7.80 L8.2 8.95 L3 10.10 L8.2 11.25 L3 12.40 L8.2 13.55 L3 14.70 L8.2 15.85 L3 17.00 L8.2 18.15 L3 19.30 L8.2 20.45 L3 21.60 L8.2 22.75 L3 23.90" fill="none" stroke="#5a7a0c" stroke-width=".55"/><path d="M15.8 5.500 L21 6.65 L15.8 7.80 L21 8.95 L15.8 10.10 L21 11.25 L15.8 12.40 L21 13.55 L15.8 14.70 L21 15.85 L15.8 17.00 L21 18.15 L15.8 19.30 L21 20.45 L15.8 21.60 L21 22.75 L15.8 23.90" fill="none" stroke="#5a7a0c" stroke-width=".55"/><path d="M8.500 4 Q12 2.500 15.500 4 V23.800 Q12 22 8.500 23.800Z" fill="#6ab4ec" stroke="#2f6fae" stroke-width=".6"/><path d="M2.600 5 Q2.600 0 12 -.300 Q21.400 0 21.400 5 Q17 3.500 15.500 4.200 Q12 2.500 8.500 4.200 Q7 3.500 2.600 5Z" fill="#88ccf8" stroke="#3a7ab8" stroke-width=".5"/></svg>
<svg class="ico" style="left:1593px;top:33px;width:24px;height:24px" viewBox="0 0 24 24"><path d="M5.500 0 H23.800 V20 H19.800 V4 H5.500Z" fill="#efc88a" stroke="#9a7434" stroke-width=".8"/><path d="M0 4.200 L19 23.500 H0Z" fill="#3de0e0" stroke="#0f7e8a" stroke-width=".9"/><path d="M3.500 12.500 L11 20.300 H3.500Z" fill="#f0f0f0" stroke="#0f7e8a" stroke-width=".8"/></svg>
<svg class="ico" style="left:1630px;top:33px;width:24px;height:24px" viewBox="0 0 24 24"><path d="M9.500 -.200 H14.300 V3.500 H17.700 L12 7.200 L6 3.500 H9.500Z" fill="#f3c06a" stroke="#c8923a" stroke-width=".5"/><path d="M2 10 Q12 4 21.600 10 V21 L17.500 24 Q12 21 6.500 24 L2 21Z" fill="#a8dcfc" stroke="#3a5a7a" stroke-width=".7"/><path d="M17.500 12.500 L21.600 10 V21 L17.500 24Z" fill="#68b0f0"/><path d="M2 10 Q12 4 21.600 10 L17.500 12.500 Q12 9 6.500 12.500Z" fill="#78ccfc" stroke="#2a4a6a" stroke-width=".5"/><path d="M6.500 12.700 Q12 8.800 17.500 12.700 V23.800 Q12 21 6.500 23.800Z" fill="#b4dc20" stroke="#5a7a10" stroke-width=".6"/></svg>
<svg class="ico" style="left:1667px;top:33px;width:24px;height:24px" viewBox="0 0 24 24"><path d="M1 0 L9 8 V22 L1 13.800Z" fill="#d2d2d2"/><path d="M23.700 -.700 L15.500 7.500 V22 L23.700 13.800Z" fill="#48b4b4"/><path d="M12.400 -2 V26" stroke="#48b4b4" stroke-width="1" stroke-dasharray="2.200 1.400"/></svg>
<div class="abs" style="left:1700px;top:42px;width:0;height:0;border-left:4px solid transparent;border-right:4px solid transparent;border-top:4px solid #111"></div>
<svg class="ico" style="left:1715px;top:33px;width:24px;height:24px" viewBox="0 0 24 24"><path d="M7.500 3 C-1.500 7 -.500 20 9 22.800 C14 24 19.500 21 20.500 16" fill="none" stroke="#6cc4f5" stroke-width="2"/><path d="M16.500 17 L21 10 L24.500 17.500Z" fill="#6cc4f5"/><path d="M9 1.500 L7.500 5.500 L4.500 3" fill="none" stroke="#6cc4f5" stroke-width="1.200"/><text x="12" y="19" font-size="23" font-weight="bold" font-family="Liberation Serif,serif" fill="#e82a2a" text-anchor="middle">?</text></svg>
<svg class="ico" style="left:1752px;top:33px;width:24px;height:24px" viewBox="0 0 24 24"><path d="M12 .8 L22.500 5.500 V18.500 L12 23.500 L1.500 18.500 V5.500Z M1.500 5.500 L12 10.500 L22.500 5.500 M12 10.500 V23.500" fill="none" stroke="#3d9be3" stroke-width=".8"/><path d="M1.500 18.500 L12 13.500 L22.500 18.500 M12 .8 V13.500" fill="none" stroke="#8cc6f0" stroke-width=".5"/><text x="12.500" y="20.500" font-size="19" font-weight="bold" font-style="italic" font-family="Liberation Serif,serif" fill="#d0d828" stroke="#222" stroke-width=".8" text-anchor="middle">i</text></svg>
<svg class="ico" style="left:1790px;top:33px;width:24px;height:24px" viewBox="0 0 24 24"><circle cx="12" cy="12" r="11" fill="#f1f2ee" stroke="#a8d828" stroke-width="1.200"/><path d="M8 5.500 L19 12 L8 18.500Z" fill="#48a4ee"/><path d="M8 18.500 L19 12 L17.500 11.800 L8 16.800Z" fill="#2a84d8"/></svg>
<svg class="ico" style="left:1823.5px;top:42.5px;width:8.5px;height:5.5px" viewBox="0 0 8.500 5.500"><path d="M.700 .300 L3.400 2.750 L.700 5.200 M4.600 .300 L7.300 2.750 L4.600 5.200" fill="none" stroke="#000" stroke-width="1.500"/></svg>
<div class="abs" style="left:1834px;top:25px;width:1px;height:39px;background:#a0a0a0"></div><div class="abs" style="left:1835px;top:25px;width:1px;height:39px;background:#fff"></div>
<i class="abs" style="left:1839px;top:30px;width:1px;height:1px;background:#a0a0a0;box-shadow:-1px -1px 0 #fff,-1px 0 0 #cdcdcd,0 -1px 0 #cdcdcd"></i><i class="abs" style="left:1839px;top:34px;width:1px;height:1px;background:#a0a0a0;box-shadow:-1px -1px 0 #fff,-1px 0 0 #cdcdcd,0 -1px 0 #cdcdcd"></i><i class="abs" style="left:1839px;top:38px;width:1px;height:1px;background:#a0a0a0;box-shadow:-1px -1px 0 #fff,-1px 0 0 #cdcdcd,0 -1px 0 #cdcdcd"></i><i class="abs" style="left:1839px;top:42px;width:1px;height:1px;background:#a0a0a0;box-shadow:-1px -1px 0 #fff,-1px 0 0 #cdcdcd,0 -1px 0 #cdcdcd"></i><i class="abs" style="left:1839px;top:46px;width:1px;height:1px;background:#a0a0a0;box-shadow:-1px -1px 0 #fff,-1px 0 0 #cdcdcd,0 -1px 0 #cdcdcd"></i><i class="abs" style="left:1839px;top:50px;width:1px;height:1px;background:#a0a0a0;box-shadow:-1px -1px 0 #fff,-1px 0 0 #cdcdcd,0 -1px 0 #cdcdcd"></i><i class="abs" style="left:1839px;top:54px;width:1px;height:1px;background:#a0a0a0;box-shadow:-1px -1px 0 #fff,-1px 0 0 #cdcdcd,0 -1px 0 #cdcdcd"></i><i class="abs" style="left:1839px;top:58px;width:1px;height:1px;background:#a0a0a0;box-shadow:-1px -1px 0 #fff,-1px 0 0 #cdcdcd,0 -1px 0 #cdcdcd"></i>
<svg class="ico" style="left:1849px;top:31px;width:28px;height:28px" viewBox="0 0 28 28"><defs><linearGradient id="gr" x1="0" y1="0" x2="0" y2="1"><stop offset="0" stop-color="#f0c040"/><stop offset=".5" stop-color="#e0aa28"/><stop offset="1" stop-color="#b8860a"/></linearGradient><linearGradient id="gr2" x1="0" y1="0" x2="1" y2="1"><stop offset="0" stop-color="#8a6408"/><stop offset="1" stop-color="#e8b830"/></linearGradient></defs><path d="M9 2 C14 1 20 1 23.500 3 C29.500 8 29.500 20 24 25.500 C21 27.500 14 29 10 28.300Z" fill="url(#gr)"/><ellipse cx="9.500" cy="15.200" rx="8.800" ry="13.200" fill="#eab42c"/><ellipse cx="10.300" cy="15.500" rx="6.400" ry="10.600" fill="url(#gr2)"/><ellipse cx="14" cy="14.300" rx="2.600" ry="7.200" fill="#f0f0f0" transform="rotate(-6 14 14.300)"/><circle cx="5.300" cy="17.300" r=".8" fill="#3a3ac0"/><circle cx="9.300" cy="21.500" r=".8" fill="#3a3ac0"/><circle cx="12" cy="24" r=".5" fill="#8a7ab0"/></svg>
<svg class="ico" style="left:1885px;top:42.5px;width:8.5px;height:5.5px" viewBox="0 0 8.500 5.500"><path d="M.700 .300 L3.400 2.750 L.700 5.200 M4.600 .300 L7.300 2.750 L4.600 5.200" fill="none" stroke="#000" stroke-width="1.500"/></svg>
<div class="abs" style="left:1895px;top:25px;width:1px;height:39px;background:#a0a0a0"></div><div class="abs" style="left:1896px;top:25px;width:1px;height:39px;background:#fff"></div>
<i class="abs" style="left:1900px;top:30px;width:1px;height:1px;background:#a0a0a0;box-shadow:-1px -1px 0 #fff,-1px 0 0 #cdcdcd,0 -1px 0 #cdcdcd"></i><i class="abs" style="left:1900px;top:34px;width:1px;height:1px;background:#a0a0a0;box-shadow:-1px -1px 0 #fff,-1px 0 0 #cdcdcd,0 -1px 0 #cdcdcd"></i><i class="abs" style="left:1900px;top:38px;width:1px;height:1px;background:#a0a0a0;box-shadow:-1px -1px 0 #fff,-1px 0 0 #cdcdcd,0 -1px 0 #cdcdcd"></i><i class="abs" style="left:1900px;top:42px;width:1px;height:1px;background:#a0a0a0;box-shadow:-1px -1px 0 #fff,-1px 0 0 #cdcdcd,0 -1px 0 #cdcdcd"></i><i class="abs" style="left:1900px;top:46px;width:1px;height:1px;background:#a0a0a0;box-shadow:-1px -1px 0 #fff,-1px 0 0 #cdcdcd,0 -1px 0 #cdcdcd"></i><i class="abs" style="left:1900px;top:50px;width:1px;height:1px;background:#a0a0a0;box-shadow:-1px -1px 0 #fff,-1px 0 0 #cdcdcd,0 -1px 0 #cdcdcd"></i><i class="abs" style="left:1900px;top:54px;width:1px;height:1px;background:#a0a0a0;box-shadow:-1px -1px 0 #fff,-1px 0 0 #cdcdcd,0 -1px 0 #cdcdcd"></i><i class="abs" style="left:1900px;top:58px;width:1px;height:1px;background:#a0a0a0;box-shadow:-1px -1px 0 #fff,-1px 0 0 #cdcdcd,0 -1px 0 #cdcdcd"></i>
<svg class="ico" style="left:1909px;top:42.5px;width:8.5px;height:5.5px" viewBox="0 0 8.500 5.500"><path d="M.700 .300 L3.400 2.750 L.700 5.200 M4.600 .300 L7.300 2.750 L4.600 5.200" fill="none" stroke="#000" stroke-width="1.500"/></svg>
<i class="abs" style="left:5px;top:70px;width:1px;height:1px;background:#a0a0a0;box-shadow:-1px -1px 0 #fff,-1px 0 0 #cdcdcd,0 -1px 0 #cdcdcd"></i><i class="abs" style="left:5px;top:74px;width:1px;height:1px;background:#a0a0a0;box-shadow:-1px -1px 0 #fff,-1px 0 0 #cdcdcd,0 -1px 0 #cdcdcd"></i><i class="abs" style="left:5px;top:78px;width:1px;height:1px;background:#a0a0a0;box-shadow:-1px -1px 0 #fff,-1px 0 0 #cdcdcd,0 -1px 0 #cdcdcd"></i><i class="abs" style="left:5px;top:82px;width:1px;height:1px;background:#a0a0a0;box-shadow:-1px -1px 0 #fff,-1px 0 0 #cdcdcd,0 -1px 0 #cdcdcd"></i><i class="abs" style="left:5px;top:86px;width:1px;height:1px;background:#a0a0a0;box-shadow:-1px -1px 0 #fff,-1px 0 0 #cdcdcd,0 -1px 0 #cdcdcd"></i><i class="abs" style="left:5px;top:90px;width:1px;height:1px;background:#a0a0a0;box-shadow:-1px -1px 0 #fff,-1px 0 0 #cdcdcd,0 -1px 0 #cdcdcd"></i><i class="abs" style="left:5px;top:94px;width:1px;height:1px;background:#a0a0a0;box-shadow:-1px -1px 0 #fff,-1px 0 0 #cdcdcd,0 -1px 0 #cdcdcd"></i><i class="abs" style="left:5px;top:98px;width:1px;height:1px;background:#a0a0a0;box-shadow:-1px -1px 0 #fff,-1px 0 0 #cdcdcd,0 -1px 0 #cdcdcd"></i>
<svg class="ico" style="left:16px;top:72px;width:24.4px;height:27px" viewBox="0 0 24.400 27"><path d="M0 16.300 L6.300 18.900 V26.900 L0 23.500Z" fill="#30f0f8"/><path d="M6.300 18.900 H18.900 V26.900 H6.300Z" fill="#18c8d0"/><path d="M18.900 18.900 L24.400 16.300 V23.500 L18.900 26.900Z" fill="#10a4ae"/><path d="M0 16.300 L6.300 12.600 H18.900 L24.400 16.300 L18.900 18.900 H6.300Z" fill="#12b6c0" stroke="#0a5a68" stroke-width=".55"/><path d="M0 16.300 V23.500 L6.300 26.900 H18.900 L24.400 23.500 V16.300" fill="none" stroke="#0a5a68" stroke-width=".55"/><rect x="9.5" y="9" width="5.4" height="7.300000000000001" rx=".9" fill="#f3c444" stroke="#6a4a10" stroke-width=".45"/><rect x="11.12" y="9.500" width="1.62" height="6.300000000000001" fill="#fbe48a"/><path d="M0 4.900 L6.300 7 V10 L0 7.700Z" fill="#fbe088"/><path d="M6.300 7 H18.900 V10 H6.300Z" fill="#f5c040"/><path d="M18.900 7 L24.400 4.900 V7.700 L18.900 10Z" fill="#eeb030"/><path d="M0 4.900 V7.700 L6.300 10 H18.900 L24.400 7.700 V4.900" fill="none" stroke="#6a4a10" stroke-width=".5"/><path d="M0 4.900 L6 .300 H18.900 L24.400 4.900 L18.900 7 H6.300Z" fill="#d4a94e" stroke="#6a4a10" stroke-width=".55"/></svg>
<svg class="ico" style="left:53px;top:72px;width:24.4px;height:27px" viewBox="0 0 24.400 27"><path d="M0 16.300 L6.300 18.900 V26.900 L0 23.500Z" fill="#30f0f8"/><path d="M6.300 18.900 H18.900 V26.900 H6.300Z" fill="#18c8d0"/><path d="M18.900 18.900 L24.400 16.300 V23.500 L18.900 26.900Z" fill="#10a4ae"/><path d="M0 16.300 L6.300 12.600 H18.900 L24.400 16.300 L18.900 18.900 H6.300Z" fill="#12b6c0" stroke="#0a5a68" stroke-width=".55"/><path d="M0 16.300 V23.500 L6.300 26.900 H18.900 L24.400 23.500 V16.300" fill="none" stroke="#0a5a68" stroke-width=".55"/><rect x="4.5" y="9" width="4.3" height="7.300000000000001" rx=".9" fill="#f3c444" stroke="#6a4a10" stroke-width=".45"/><rect x="5.79" y="9.500" width="1.29" height="6.300000000000001" fill="#fbe48a"/><rect x="14.9" y="9" width="4.5" height="7.300000000000001" rx=".9" fill="#f3c444" stroke="#6a4a10" stroke-width=".45"/><rect x="16.25" y="9.500" width="1.35" height="6.300000000000001" fill="#fbe48a"/><path d="M0 4.900 L6.300 7 V10 L0 7.700Z" fill="#fbe088"/><path d="M6.300 7 H18.900 V10 H6.300Z" fill="#f5c040"/><path d="M18.900 7 L24.400 4.900 V7.700 L18.900 10Z" fill="#eeb030"/><path d="M0 4.900 V7.700 L6.300 10 H18.900 L24.400 7.700 V4.900" fill="none" stroke="#6a4a10" stroke-width=".5"/><path d="M0 4.900 L6 .300 H18.900 L24.400 4.900 L18.900 7 H6.300Z" fill="#d4a94e" stroke="#6a4a10" stroke-width=".55"/></svg>
<svg class="ico" style="left:90px;top:72px;width:24.4px;height:27px" viewBox="0 0 24.400 27"><path d="M0 16.300 L6.300 18.900 V26.900 L0 23.500Z" fill="#30f0f8"/><path d="M6.300 18.900 H18.900 V26.900 H6.300Z" fill="#18c8d0"/><path d="M18.900 18.900 L24.400 16.300 V23.500 L18.900 26.900Z" fill="#10a4ae"/><path d="M0 16.300 L6.300 12.600 H18.900 L24.400 16.300 L18.900 18.900 H6.300Z" fill="#12b6c0" stroke="#0a5a68" stroke-width=".55"/><path d="M0 16.300 V23.500 L6.300 26.900 H18.900 L24.400 23.500 V16.300" fill="none" stroke="#0a5a68" stroke-width=".55"/><path d="M6.500 17.500 L15 12.700 L19.500 13.500 L8.500 19.500Z" fill="#0e9aa6" stroke="#0a5a68" stroke-width=".4"/><rect x="3.8" y="9" width="4.5" height="5.300000000000001" rx=".9" fill="#f3c444" stroke="#6a4a10" stroke-width=".45"/><rect x="5.15" y="9.500" width="1.35" height="4.300000000000001" fill="#fbe48a"/><rect x="16" y="9" width="4.3" height="8.2" rx=".9" fill="#f3c444" stroke="#6a4a10" stroke-width=".45"/><rect x="17.29" y="9.500" width="1.29" height="7.199999999999999" fill="#fbe48a"/><path d="M0 4.900 L6.300 7 V10 L0 7.700Z" fill="#fbe088"/><path d="M6.300 7 H18.900 V10 H6.300Z" fill="#f5c040"/><path d="M18.900 7 L24.400 4.900 V7.700 L18.900 10Z" fill="#eeb030"/><path d="M0 4.900 V7.700 L6.300 10 H18.900 L24.400 7.700 V4.900" fill="none" stroke="#6a4a10" stroke-width=".5"/><path d="M0 4.900 L6 .300 H18.900 L24.400 4.900 L18.900 7 H6.300Z" fill="#d4a94e" stroke="#6a4a10" stroke-width=".55"/></svg>
<svg class="ico" style="left:127px;top:72px;width:24.4px;height:27px" viewBox="0 0 24.400 27"><path d="M0 16.300 L6.300 18.900 V26.900 L0 23.500Z" fill="#30f0f8"/><path d="M6.300 18.900 H18.900 V26.900 H6.300Z" fill="#18c8d0"/><path d="M18.900 18.900 L24.400 16.300 V23.500 L18.900 26.900Z" fill="#10a4ae"/><path d="M0 16.300 L6.300 12.600 H18.900 L24.400 16.300 L18.900 18.900 H6.300Z" fill="#12b6c0" stroke="#0a5a68" stroke-width=".55"/><path d="M0 16.300 V23.500 L6.300 26.900 H18.900 L24.400 23.500 V16.300" fill="none" stroke="#0a5a68" stroke-width=".55"/><rect x="3.5" y="9" width="3.8" height="6.5" rx=".9" fill="#f3c444" stroke="#6a4a10" stroke-width=".45"/><rect x="4.64" y="9.500" width="1.14" height="5.5" fill="#fbe48a"/><rect x="10.3" y="9" width="3.8" height="7.800000000000001" rx=".9" fill="#f3c444" stroke="#6a4a10" stroke-width=".45"/><rect x="11.44" y="9.500" width="1.14" height="6.800000000000001" fill="#fbe48a"/><rect x="17" y="9" width="3.8" height="6.5" rx=".9" fill="#f3c444" stroke="#6a4a10" stroke-width=".45"/><rect x="18.14" y="9.500" width="1.14" height="5.5" fill="#fbe48a"/><path d="M0 4.900 L6.300 7 V10 L0 7.700Z" fill="#fbe088"/><path d="M6.300 7 H18.900 V10 H6.300Z" fill="#f5c040"/><path d="M18.900 7 L24.400 4.900 V7.700 L18.900 10Z" fill="#eeb030"/><path d="M0 4.900 V7.700 L6.300 10 H18.900 L24.400 7.700 V4.900" fill="none" stroke="#6a4a10" stroke-width=".5"/><path d="M0 4.900 L6 .300 H18.900 L24.400 4.900 L18.900 7 H6.300Z" fill="#d4a94e" stroke="#6a4a10" stroke-width=".55"/></svg>
<svg class="ico" style="left:163px;top:72px;width:26px;height:26px" viewBox="0 0 26 26"><path d="M7.200 1.500 L19.400 3.800 L26 12.300 L18.900 24.500 L8 22 L0 13.200Z" fill="#1cc8d0" stroke="#0a5a60" stroke-width=".7" stroke-linejoin="round"/><path d="M7.200 1.500 L19.400 3.800 L26 12.300 L13.700 10.900Z" fill="#22d4da" stroke="#0a5a60" stroke-width=".5"/><path d="M13.700 10.900 L26 12.300 L18.900 24.500 L8 22Z" fill="#16b4bc" stroke="#0a5a60" stroke-width=".5"/><ellipse cx="16.500" cy="6.500" rx="1.800" ry="1.100" fill="#6af07a" stroke="#1a8a3a" stroke-width=".4" transform="rotate(10 16.500 6.500)"/><ellipse cx="4.400" cy="12.300" rx="1.100" ry="1.500" fill="#f03a2a"/><ellipse cx="9" cy="11.600" rx="1.100" ry="1.500" fill="#f03a2a"/><g fill="#f8b020" stroke="#a06a10" stroke-width=".3"><ellipse cx="16.300" cy="14.800" rx="1.700" ry="1"/><ellipse cx="12.300" cy="20" rx="1.700" ry="1"/><ellipse cx="18.400" cy="19.300" rx="1.700" ry="1"/></g></svg>
<svg class="ico" style="left:200px;top:72px;width:26px;height:26px" viewBox="0 0 26 26"><path d="M1.100 9 L12.900 3.400 V16 L1.100 21.700Z" fill="#7a9af4" stroke="#2a4a9a" stroke-width=".6"/><path d="M12.900 3.400 L25 9 V21.700 L12.900 16Z" fill="#f6dc7c" stroke="#8a7a30" stroke-width=".6"/><path d="M1.100 21.700 L12.900 16 L25 21.700 L12.900 25.900Z" fill="#1cd4dc" stroke="#0f6e7a" stroke-width=".6"/><path d="M6.300 2.400 L12.900 .100 L19.900 2.400 V9.500 L12.900 12.300 L6.300 9.500Z" fill="#3ab8e0" stroke="#0a4a6a" stroke-width=".6"/><path d="M12.900 5 L19.900 2.400 V9.500 L12.900 12.300Z" fill="#8adcc0" stroke="#0a4a6a" stroke-width=".4"/><path d="M6.300 2.400 L12.900 .100 L19.900 2.400 L12.900 5Z" fill="#18b8c8" stroke="#0a4a6a" stroke-width=".4"/></svg>
<svg class="ico" style="left:238px;top:72px;width:24px;height:24px" viewBox="0 0 24 24"><path d="M.600 5.300 L12.400 1.300 L24 5.300 V20.500 L12.400 24 L.600 20.300Z" fill="#3a8af8" stroke="#2a5ad0" stroke-width=".5"/><path d="M17 4 L24 5.300 V20.500 L12.400 24 L15 19Z" fill="#1414c0"/><path d="M2 6.500 C7 2.500 15 2.500 20 5.500 C20 12 17.500 18.500 12.400 22.500 C6 20 2.500 14 2 6.500Z" fill="#28d8e8"/><path d="M3.500 7 C8 3.800 14.500 3.800 18.500 6.500 C18.500 12 16.500 17 12 20.500 C7 18.500 4 13.500 3.500 7Z" fill="#5ae83a"/><path d="M5.500 7.800 C9 5.300 14 5.300 17 7.500 C17 12 15 16 11.800 18.500 C8 16.500 6 12.500 5.500 7.800Z" fill="#f5ee20"/><path d="M7.300 8.500 C9.500 6.800 13.500 6.800 15.500 8.500 C15.500 12 14 15 11.600 16.800 C9 15 7.600 12 7.300 8.500Z" fill="#f82a2a"/><path d="M7.300 8.500 C8.500 7.500 10 7.200 11.500 7.200 L11.600 16.800 C9 15 7.600 12 7.300 8.500Z" fill="#f88080"/><circle cx="19.400" cy="19.800" r="4.500" fill="#fff" stroke="#9ab8f0" stroke-width=".5"/><path d="M16.800 18.800 C16.800 17.200 17.900 16.700 18.900 17 L18.400 18.300 L19.400 19.300 L20.500 18.800 C20.800 20.300 20 20.900 19.200 20.900 L22 23 L21 23.800 L18.400 21.400 C17.300 20.900 16.800 19.900 16.800 18.800Z" fill="#2a6af0"/></svg>
<svg class="ico" style="left:275px;top:72px;width:24px;height:24px" viewBox="0 0 24 24"><circle cx="12.200" cy="12.800" r="10.400" fill="#fff" stroke="#1cd0d8" stroke-width="2.600"/><circle cx="12.200" cy="12.800" r="11.800" fill="none" stroke="#0a4a50" stroke-width=".7"/><circle cx="12.200" cy="12.800" r="9" fill="none" stroke="#0a4a50" stroke-width=".6"/><path d="M4.500 15 C4.500 8.500 8 5.500 12.200 5.500 C16.500 5.500 20 8.500 20 15 C17 12 7.500 12 4.500 15Z" fill="#f0f0f4" stroke="#b8b8c8" stroke-width=".4"/><path d="M8 9 C10 6 14.500 6 16.500 9 C14 8 10.500 8 8 9Z" fill="#f0e4b0"/><ellipse cx="12.200" cy="16" rx="4.800" ry="5.500" fill="#f8dc90" stroke="#c8a860" stroke-width=".4"/><path d="M12.200 13.500 V18" stroke="#f08a7a" stroke-width="1.300"/><ellipse cx="12.200" cy="19.300" rx="1" ry=".6" fill="#e81a1a"/><path d="M10 12 L11.500 13 M14.500 12 L13 13" stroke="#333" stroke-width=".5"/></svg>
<svg class="ico" style="left:312px;top:73px;width:24px;height:24px" viewBox="0 0 24 24"><ellipse cx="4.500" cy="11" rx="4" ry="2.300" fill="#28d8e0" stroke="#0f8e9a" stroke-width=".5"/><path d="M4.500 11 V1.500 M3.500 3 L4.500 1.500 L5.500 3" fill="none" stroke="#222" stroke-width=".6"/><ellipse cx="18.500" cy="19" rx="4" ry="2.300" fill="#f5a820" stroke="#a06a10" stroke-width=".5"/><path d="M18.500 19 V9.500 M17.500 11 L18.500 9.500 L19.500 11" fill="none" stroke="#222" stroke-width=".6"/></svg>
<svg class="ico" style="left:349px;top:73px;width:24px;height:24px" viewBox="0 0 24 24"><ellipse cx="4.500" cy="11" rx="4" ry="2.300" fill="#28d8e0" stroke="#0f8e9a" stroke-width=".5"/><path d="M4.500 11 V1.500 M3.500 3 L4.500 1.500 L5.500 3" fill="none" stroke="#222" stroke-width=".6"/><path d="M8 23.500 L23.500 7.500" stroke="#222" stroke-width=".9"/><circle cx="8" cy="23.500" r="1.300" fill="#111"/><circle cx="23.500" cy="7.500" r="1.300" fill="#111"/></svg>
<svg class="ico" style="left:386px;top:73px;width:24px;height:24px" viewBox="0 0 24 24"><path d="M5 10.500 L19 3.500 L15 20Z" fill="none" stroke="#333" stroke-width=".6"/><ellipse cx="4.500" cy="10.500" rx="4" ry="2.400" fill="#f04a4a" stroke="#a01c24" stroke-width=".5"/><ellipse cx="19.500" cy="3.500" rx="4" ry="2.400" fill="#28d8e0" stroke="#0f8e9a" stroke-width=".5"/><ellipse cx="15" cy="20.500" rx="4" ry="2.400" fill="#f5a820" stroke="#a06a10" stroke-width=".5"/></svg>
<svg class="ico" style="left:423px;top:73px;width:24px;height:24px" viewBox="0 0 24 24"><path d="M5.500 3 L19 12 L5.500 21" fill="none" stroke="#d8b020" stroke-width="1.300"/><circle cx="5.500" cy="3" r="3" fill="#5aaee8"/><circle cx="19" cy="12" r="3" fill="#5aaee8"/><circle cx="5.500" cy="21" r="3" fill="#5aaee8"/></svg>
<svg class="ico" style="left:460px;top:73px;width:24px;height:24px" viewBox="0 0 24 24"><defs><pattern id="vx" width="2.100" height="2.100" patternUnits="userSpaceOnUse"><rect width="2.100" height="2.100" fill="#22d0d8"/><rect x=".700" y=".700" width=".9" height=".9" fill="#e8ffff"/></pattern><pattern id="vy" width="2.100" height="2.100" patternUnits="userSpaceOnUse"><rect width="2.100" height="2.100" fill="#f5c83a"/><rect x=".700" y=".700" width=".8" height=".8" fill="#fff4c0"/></pattern></defs><path d="M4.700 7.300 L18 .200 L23.700 3 V15 L18 18 L4.700 12Z" fill="url(#vy)"/><path d="M18 5.500 L23.700 3 V15 L18 18Z" fill="#f0b828" opacity=".55"/><path d="M0 11.600 L5.500 9.300 H18 L12.500 11.600Z" fill="#7ae0d0"/><path d="M12.500 11.600 L18 9.300 V21 L12.500 23.900Z" fill="#3ac8c0"/><path d="M13 12 L18 10 M13 14 L18 12 M13 16 L18 14 M13 18 L18 16 M13 20 L18 18 M13 22 L18 20" stroke="#c8f4f0" stroke-width=".5"/><rect x="0" y="11.600" width="12.500" height="12.300" fill="url(#vx)"/></svg>
<svg class="ico" style="left:497px;top:73px;width:24px;height:24px" viewBox="0 0 24 24"><text x=".700" y="12.800" textLength="23" lengthAdjust="spacingAndGlyphs" font-size="12.500" font-weight="bold" font-family="Liberation Sans,sans-serif" fill="#16c4d0" stroke="#0a5a68" stroke-width=".45" >Null</text><rect x="1" y="15.500" width="18" height="2.300" fill="#f3c95c" stroke="#c8922a" stroke-width=".4"/><rect x="1" y="20" width="11" height="2.300" fill="#f3c95c" stroke="#c8922a" stroke-width=".4"/></svg>
<svg class="ico" style="left:534px;top:73px;width:24px;height:24px" viewBox="0 0 24 24"><path d="M.400 3.600 L2 3 L6.400 24 H.400Z" fill="#12b0ba" stroke="#0a5a68" stroke-width=".5"/><path d="M2 3 L9.300 .200 L15 20.200 L6.400 24Z" fill="#22e6ee" stroke="#0a5a68" stroke-width=".6" stroke-linejoin="round"/><path d="M8 15.300 L20 3.200" stroke="#222" stroke-width=".6" stroke-dasharray="2.500 1"/><path d="M8 15.300 H23.600" stroke="#222" stroke-width=".6"/><circle cx="17.600" cy="15.300" r=".8" fill="#111"/><circle cx="14" cy="9.200" r=".8" fill="#111"/><circle cx="21" cy="2.200" r="2.300" fill="#fbe49a" stroke="#d8b860" stroke-width=".4"/></svg>
<svg class="ico" style="left:571px;top:73px;width:24px;height:24px" viewBox="0 0 24 24"><text x="0" y="21" font-size="27" font-family="Liberation Sans,sans-serif" fill="#1eb8c0" textLength="21.500" lengthAdjust="spacingAndGlyphs">CI</text></svg>
<svg class="ico" style="left:606px;top:73px;width:30px;height:24px" viewBox="0 0 30 24"><text x="-.500" y="20.700" font-size="22" font-family="Liberation Sans,sans-serif" fill="#8a1c2c">U</text><text x="15.500" y="20.700" font-size="10" font-family="Liberation Sans,sans-serif" fill="#555">ser</text></svg>
<div class="abs" style="left:677px;top:66px;width:1px;height:38px;background:#a0a0a0"></div><div class="abs" style="left:678px;top:66px;width:1px;height:38px;background:#fff"></div>
<i class="abs" style="left:682px;top:70px;width:1px;height:1px;background:#a0a0a0;box-shadow:-1px -1px 0 #fff,-1px 0 0 #cdcdcd,0 -1px 0 #cdcdcd"></i><i class="abs" style="left:682px;top:74px;width:1px;height:1px;background:#a0a0a0;box-shadow:-1px -1px 0 #fff,-1px 0 0 #cdcdcd,0 -1px 0 #cdcdcd"></i><i class="abs" style="left:682px;top:78px;width:1px;height:1px;background:#a0a0a0;box-shadow:-1px -1px 0 #fff,-1px 0 0 #cdcdcd,0 -1px 0 #cdcdcd"></i><i class="abs" style="left:682px;top:82px;width:1px;height:1px;background:#a0a0a0;box-shadow:-1px -1px 0 #fff,-1px 0 0 #cdcdcd,0 -1px 0 #cdcdcd"></i><i class="abs" style="left:682px;top:86px;width:1px;height:1px;background:#a0a0a0;box-shadow:-1px -1px 0 #fff,-1px 0 0 #cdcdcd,0 -1px 0 #cdcdcd"></i><i class="abs" style="left:682px;top:90px;width:1px;height:1px;background:#a0a0a0;box-shadow:-1px -1px 0 #fff,-1px 0 0 #cdcdcd,0 -1px 0 #cdcdcd"></i><i class="abs" style="left:682px;top:94px;width:1px;height:1px;background:#a0a0a0;box-shadow:-1px -1px 0 #fff,-1px 0 0 #cdcdcd,0 -1px 0 #cdcdcd"></i><i class="abs" style="left:682px;top:98px;width:1px;height:1px;background:#a0a0a0;box-shadow:-1px -1px 0 #fff,-1px 0 0 #cdcdcd,0 -1px 0 #cdcdcd"></i>
<svg class="ico" style="left:694px;top:72px;width:24px;height:27px" viewBox="0 0 24 27"><path d="M4.200 17 H20 V22.500 Q20 24.500 15 25.300 V26 Q12 27 9 26 V25.300 Q4.200 24.500 4.200 22.500Z" fill="#14dce4" stroke="#0a4a50" stroke-width=".5"/><path d="M4.200 22 Q12 25.500 20 22" fill="none" stroke="#0a4a50" stroke-width=".4"/><path d="M4.200 13.500 H20 V18 Q12 21 4.200 18Z" fill="#10a8b4" stroke="#0a4a50" stroke-width=".4"/><path d="M8.500 13.500 H14 V16.500 L11 18.500 L8.500 17Z" fill="#0a7884" stroke="#0a4a50" stroke-width=".4"/><path d="M4.200 4.500 Q4.200 1.500 9.500 .500 Q12 -.200 14.500 .500 Q20 1.500 20 4.500 V13 Q19 15 15.500 15.500 L14.500 13.500 H8.500 V15.500 Q4.200 15 4.200 13Z" fill="#14dce4" stroke="#0a4a50" stroke-width=".5"/><path d="M4.200 4.500 Q12 8.500 20 4.500 Q20 1.500 14.500 .500 Q12 -.200 9.500 .500 Q4.200 1.500 4.200 4.500Z" fill="#12b8c4" stroke="#0a4a50" stroke-width=".4"/><ellipse cx="12" cy="2.300" rx="3.300" ry="1.300" fill="#14dce4" stroke="#0a4a50" stroke-width=".35"/><path d="M22 8.500 C23 11 21.500 12.500 19.500 12.500 L19.800 11.300 L17.300 13.300 L19.500 15 L19.600 13.800 C22.500 13.800 23.800 11 22 8.500Z" fill="#f8e0a8" stroke="#f8e0a8" stroke-width=".5" stroke-linejoin="round"/><path d="M.500 15 C-.500 17.500 1 19 3 19 L2.800 17.800 L5.300 19.800 L3 21.500 L3 20.300 C0 20.300 -1.300 17.500 .500 15Z" fill="#f8e0a8" stroke="#f8e0a8" stroke-width=".5" stroke-linejoin="round"/></svg>
<svg class="ico" style="left:731px;top:72px;width:24px;height:27px" viewBox="0 0 24 27"><path d="M4.200 17 H20 V22.500 Q20 24.500 15 25.300 V26 Q12 27 9 26 V25.300 Q4.200 24.500 4.200 22.500Z" fill="#14dce4" stroke="#0a4a50" stroke-width=".5"/><path d="M4.200 22 Q12 25.500 20 22" fill="none" stroke="#0a4a50" stroke-width=".4"/><path d="M4.200 13.500 H20 V18 Q12 21 4.200 18Z" fill="#10a8b4" stroke="#0a4a50" stroke-width=".4"/><path d="M8.500 13.500 H14 V16.500 L11 18.500 L8.500 17Z" fill="#0a7884" stroke="#0a4a50" stroke-width=".4"/><path d="M4.200 4.500 Q4.200 1.500 9.500 .500 Q12 -.200 14.500 .500 Q20 1.500 20 4.500 V13 Q19 15 15.500 15.500 L14.500 13.500 H8.500 V15.500 Q4.200 15 4.200 13Z" fill="#f6e07c" stroke="#0a4a50" stroke-width=".5"/><path d="M4.200 4.500 Q12 8.500 20 4.500 Q20 1.500 14.500 .500 Q12 -.200 9.500 .500 Q4.200 1.500 4.200 4.500Z" fill="#e8b84c" stroke="#0a4a50" stroke-width=".4"/><ellipse cx="12" cy="2.300" rx="3.300" ry="1.300" fill="#f6e07c" stroke="#0a4a50" stroke-width=".35"/><path d="M22 8.500 C23 11 21.500 12.500 19.500 12.500 L19.800 11.300 L17.300 13.300 L19.500 15 L19.600 13.800 C22.500 13.800 23.800 11 22 8.500Z" fill="#f0606c" stroke="#f0606c" stroke-width=".5" stroke-linejoin="round"/><path d="M.500 15 C-.500 17.500 1 19 3 19 L2.800 17.800 L5.300 19.800 L3 21.500 L3 20.300 C0 20.300 -1.300 17.500 .500 15Z" fill="#f0606c" stroke="#f0606c" stroke-width=".5" stroke-linejoin="round"/></svg>
<svg class="ico" style="left:768px;top:72px;width:24px;height:24px" viewBox="0 0 24 24"><path d="M12 3 V23 M2 12.900 H22" stroke="#d2d2d2" stroke-width="2"/><path d="M5.500 6.400 L18.500 19.400 M18.500 6.400 L5.500 19.400" stroke="#666" stroke-width=".6"/><g fill="#14e8f0" stroke="#0f8e9a" stroke-width=".4"><circle cx="12" cy="3" r="1.800"/><circle cx="12" cy="22.800" r="1.800"/><circle cx="2.100" cy="12.900" r="1.800"/><circle cx="21.900" cy="12.900" r="1.800"/><circle cx="5.900" cy="6.800" r="1.800"/><circle cx="18.100" cy="6.800" r="1.800"/><circle cx="5.900" cy="19" r="1.800"/><circle cx="18.100" cy="19" r="1.800"/></g><circle cx="12" cy="12.900" r="2.300" fill="#f5c440" stroke="#b8920a" stroke-width=".4"/></svg>
<div class="abs" style="left:837px;top:66px;width:1px;height:38px;background:#a0a0a0"></div><div class="abs" style="left:838px;top:66px;width:1px;height:38px;background:#fff"></div>
<i class="abs" style="left:842px;top:70px;width:1px;height:1px;background:#a0a0a0;box-shadow:-1px -1px 0 #fff,-1px 0 0 #cdcdcd,0 -1px 0 #cdcdcd"></i><i class="abs" style="left:842px;top:74px;width:1px;height:1px;background:#a0a0a0;box-shadow:-1px -1px 0 #fff,-1px 0 0 #cdcdcd,0 -1px 0 #cdcdcd"></i><i class="abs" style="left:842px;top:78px;width:1px;height:1px;background:#a0a0a0;box-shadow:-1px -1px 0 #fff,-1px 0 0 #cdcdcd,0 -1px 0 #cdcdcd"></i><i class="abs" style="left:842px;top:82px;width:1px;height:1px;background:#a0a0a0;box-shadow:-1px -1px 0 #fff,-1px 0 0 #cdcdcd,0 -1px 0 #cdcdcd"></i><i class="abs" style="left:842px;top:86px;width:1px;height:1px;background:#a0a0a0;box-shadow:-1px -1px 0 #fff,-1px 0 0 #cdcdcd,0 -1px 0 #cdcdcd"></i><i class="abs" style="left:842px;top:90px;width:1px;height:1px;background:#a0a0a0;box-shadow:-1px -1px 0 #fff,-1px 0 0 #cdcdcd,0 -1px 0 #cdcdcd"></i><i class="abs" style="left:842px;top:94px;width:1px;height:1px;background:#a0a0a0;box-shadow:-1px -1px 0 #fff,-1px 0 0 #cdcdcd,0 -1px 0 #cdcdcd"></i><i class="abs" style="left:842px;top:98px;width:1px;height:1px;background:#a0a0a0;box-shadow:-1px -1px 0 #fff,-1px 0 0 #cdcdcd,0 -1px 0 #cdcdcd"></i>
<svg class="ico" style="left:855px;top:73px;width:24px;height:24px" viewBox="0 0 24 24"><rect x=".500" y="1.500" width="21.500" height="21" rx="1.500" fill="#b9b9f3" stroke="#8a8ad8" stroke-width=".9"/><path d="M7 6.500 V17.500 M16 6.500 L8.500 12 L16 17.500Z" fill="#fff" stroke="#7a7ac0" stroke-width=".8"/><rect x="6" y="6.500" width="2" height="11" fill="#fff" stroke="#7a7ac0" stroke-width=".6"/></svg>
<svg class="ico" style="left:892px;top:73px;width:24px;height:24px" viewBox="0 0 24 24"><rect x=".500" y="1.500" width="21.500" height="21" rx="1.500" fill="#b9b9f3" stroke="#8a8ad8" stroke-width=".9"/><path d="M11 6.500 L4 12 L11 17.500Z M18.500 6.500 L11.500 12 L18.500 17.500Z" fill="#fff" stroke="#7a7ac0" stroke-width=".8"/></svg>
<svg class="ico" style="left:929px;top:73px;width:24px;height:24px" viewBox="0 0 24 24"><rect x=".500" y="1.500" width="21.500" height="21" rx="1.500" fill="#b9b9f3" stroke="#8a8ad8" stroke-width=".9"/><path d="M11.500 6.500 L18.500 12 L11.500 17.500Z M4 6.500 L11 12 L4 17.500Z" fill="#fff" stroke="#7a7ac0" stroke-width=".8"/></svg>
<svg class="ico" style="left:966px;top:73px;width:24px;height:24px" viewBox="0 0 24 24"><path d="M2 1.500 H22.500 Q24 1.500 24 3 V17.500 H15 V20.500 H18.500 V23 H6 V20.500 H9.500 V17.500 H.500 V3 Q.500 1.500 2 1.500Z" fill="#b9b9f3" stroke="#8a8ad8" stroke-width=".9"/><path d="M9.500 5 L16.500 9.500 L9.500 14Z" fill="#fff" stroke="#7a7ac0" stroke-width=".8"/></svg>
<div class="abs" style="left:1034px;top:66px;width:1px;height:38px;background:#a0a0a0"></div><div class="abs" style="left:1035px;top:66px;width:1px;height:38px;background:#fff"></div>
<i class="abs" style="left:1039px;top:70px;width:1px;height:1px;background:#a0a0a0;box-shadow:-1px -1px 0 #fff,-1px 0 0 #cdcdcd,0 -1px 0 #cdcdcd"></i><i class="abs" style="left:1039px;top:74px;width:1px;height:1px;background:#a0a0a0;box-shadow:-1px -1px 0 #fff,-1px 0 0 #cdcdcd,0 -1px 0 #cdcdcd"></i><i class="abs" style="left:1039px;top:78px;width:1px;height:1px;background:#a0a0a0;box-shadow:-1px -1px 0 #fff,-1px 0 0 #cdcdcd,0 -1px 0 #cdcdcd"></i><i class="abs" style="left:1039px;top:82px;width:1px;height:1px;background:#a0a0a0;box-shadow:-1px -1px 0 #fff,-1px 0 0 #cdcdcd,0 -1px 0 #cdcdcd"></i><i class="abs" style="left:1039px;top:86px;width:1px;height:1px;background:#a0a0a0;box-shadow:-1px -1px 0 #fff,-1px 0 0 #cdcdcd,0 -1px 0 #cdcdcd"></i><i class="abs" style="left:1039px;top:90px;width:1px;height:1px;background:#a0a0a0;box-shadow:-1px -1px 0 #fff,-1px 0 0 #cdcdcd,0 -1px 0 #cdcdcd"></i><i class="abs" style="left:1039px;top:94px;width:1px;height:1px;background:#a0a0a0;box-shadow:-1px -1px 0 #fff,-1px 0 0 #cdcdcd,0 -1px 0 #cdcdcd"></i><i class="abs" style="left:1039px;top:98px;width:1px;height:1px;background:#a0a0a0;box-shadow:-1px -1px 0 #fff,-1px 0 0 #cdcdcd,0 -1px 0 #cdcdcd"></i>
<svg class="ico" style="left:1051px;top:73px;width:24px;height:24px" viewBox="0 0 24 24"><path d="M1 4 L8.500 1.500 L10 6 L5 7.500 L6.500 12 L3.500 13Z" fill="#6ab8f2" stroke="#2a6ab0" stroke-width=".6"/><path d="M3.500 13 L6.500 12 L6.800 13 L3.800 14Z" fill="#2a7ad0"/><path d="M23.500 15 L25.500 21.500 L17 24 L15.500 20 L20.500 18.500 L19.500 15.500Z" fill="#6ab8f2" stroke="#2a6ab0" stroke-width=".6"/><path d="M17 24 L25.500 21.500 L25.800 22.700 L17.300 25.200Z" fill="#2a7ad0"/><path d="M8.500 5 L16.500 3 L19 10.500 L11.500 13Z" fill="#f0dc9a" stroke="#a08a40" stroke-width=".6"/><path d="M11.500 13 L19 10.500 L19.500 12.500 L12 15Z" fill="#e8a020"/><path d="M7 14 V25 M1.500 19.500 H12.500 M5 16.300 L7 14 L9 16.300 M5 22.700 L7 25 L9 22.700 M3.800 17.500 L1.500 19.500 L3.800 21.500 M10.200 17.500 L12.500 19.500 L10.200 21.500" fill="none" stroke="#c8c0a0" stroke-width="2"/><path d="M7 14 V25 M1.500 19.500 H12.500 M5 16.300 L7 14 L9 16.300 M5 22.700 L7 25 L9 22.700 M3.800 17.500 L1.500 19.500 L3.800 21.500 M10.200 17.500 L12.500 19.500 L10.200 21.500" fill="none" stroke="#f8f0dc" stroke-width="1.100"/></svg>
<svg class="ico" style="left:1088px;top:73px;width:24px;height:24px" viewBox="0 0 24 24"><path d="M12 .300 L18 8.700 H6Z" fill="#e8e8e8" stroke="#a8a8a8" stroke-width=".6"/><path d="M12 .300 L14.300 8.700" stroke="#a8a8a8" stroke-width=".5"/><rect x="1.500" y="10" width="8.500" height="8.300" fill="#cfcfcf" stroke="#a8a8a8" stroke-width=".6"/><circle cx="18.300" cy="14.200" r="4.400" fill="#b8b8b8" stroke="#a8a8a8" stroke-width=".6"/><path d="M7 19.800 V21.300 H20 V22.800 H7 V24.300 L3 22.050Z" fill="#fff" stroke="#c0c0c0" stroke-width=".5"/></svg>
<svg class="ico" style="left:1125px;top:73px;width:24px;height:24px" viewBox="0 0 24 24"><path d="M12 .300 L18 8.700 H6Z" fill="#e8e8e8" stroke="#a8a8a8" stroke-width=".6"/><path d="M12 .300 L14.300 8.700" stroke="#a8a8a8" stroke-width=".5"/><rect x="1.500" y="10" width="8.500" height="8.300" fill="#cfcfcf" stroke="#a8a8a8" stroke-width=".6"/><circle cx="18.300" cy="14.200" r="4.400" fill="#b8b8b8" stroke="#a8a8a8" stroke-width=".6"/><path d="M17 19.800 V21.300 H4 V22.800 H17 V24.300 L21 22.050Z" fill="#fff" stroke="#c0c0c0" stroke-width=".5"/></svg>
<svg class="ico" style="left:1162px;top:73px;width:24px;height:24px" viewBox="0 0 24 24"><path d="M12 .300 L18 8.700 H6Z" fill="#f8e4a0" stroke="#0f6e7a" stroke-width=".6"/><path d="M12 .300 L14.500 8.700 H18Z" fill="#f0a820"/><path d="M12 .300 L14.300 8.700" stroke="#0f6e7a" stroke-width=".5"/><rect x="1.500" y="10" width="8.500" height="8.300" fill="#3ae6dc" stroke="#0f6e7a" stroke-width=".6"/><circle cx="18.300" cy="14.200" r="4.400" fill="#14b8ac" stroke="#0f6e7a" stroke-width=".6"/><path d="M7.500 19.800 L11 22.050 L7.500 24.300 V22.800 H2 V21.300 H7.500Z M16.500 19.800 L13 22.050 L16.500 24.300 V22.800 H22 V21.300 H16.500Z" fill="#f8ecc0" stroke="#8a7a40" stroke-width=".5"/></svg>
<i class="abs" style="left:5px;top:110px;width:1px;height:1px;background:#a0a0a0;box-shadow:-1px -1px 0 #fff,-1px 0 0 #cdcdcd,0 -1px 0 #cdcdcd"></i><i class="abs" style="left:5px;top:114px;width:1px;height:1px;background:#a0a0a0;box-shadow:-1px -1px 0 #fff,-1px 0 0 #cdcdcd,0 -1px 0 #cdcdcd"></i><i class="abs" style="left:5px;top:118px;width:1px;height:1px;background:#a0a0a0;box-shadow:-1px -1px 0 #fff,-1px 0 0 #cdcdcd,0 -1px 0 #cdcdcd"></i><i class="abs" style="left:5px;top:122px;width:1px;height:1px;background:#a0a0a0;box-shadow:-1px -1px 0 #fff,-1px 0 0 #cdcdcd,0 -1px 0 #cdcdcd"></i><i class="abs" style="left:5px;top:126px;width:1px;height:1px;background:#a0a0a0;box-shadow:-1px -1px 0 #fff,-1px 0 0 #cdcdcd,0 -1px 0 #cdcdcd"></i><i class="abs" style="left:5px;top:130px;width:1px;height:1px;background:#a0a0a0;box-shadow:-1px -1px 0 #fff,-1px 0 0 #cdcdcd,0 -1px 0 #cdcdcd"></i><i class="abs" style="left:5px;top:134px;width:1px;height:1px;background:#a0a0a0;box-shadow:-1px -1px 0 #fff,-1px 0 0 #cdcdcd,0 -1px 0 #cdcdcd"></i><i class="abs" style="left:5px;top:138px;width:1px;height:1px;background:#a0a0a0;box-shadow:-1px -1px 0 #fff,-1px 0 0 #cdcdcd,0 -1px 0 #cdcdcd"></i>
<svg class="ico" style="left:13px;top:110px;width:30px;height:30px" viewBox="0 0 30 30"><defs><linearGradient id="t1g" x1="0" y1="0" x2="0" y2="1"><stop offset="0" stop-color="#00f0ff"/><stop offset="1" stop-color="#e8ffff"/></linearGradient></defs><rect x="0" y="3" width="30" height="24" fill="url(#t1g)"/><path d="M1 10 L20 4.500 L28 8.500 L8.500 15Z" fill="#4aa83a" stroke="#2a7a20" stroke-width=".5"/><path d="M1 10 L8.500 15 V16.500 L1 11.500Z" fill="#2a7a20"/><path d="M8.500 15 L28 8.500 V10 L8.500 16.500Z" fill="#3a9030"/><path d="M1 19 L20 14 L28 18 L8.500 25.500Z" fill="#d8d8d8" stroke="#8a8a8a" stroke-width=".5"/><path d="M5 18 L12 23.500 M9 17 L16 22 M13 16 L20 20.500 M17 15 L24 19" stroke="#999" stroke-width=".5"/></svg>
<svg class="ico" style="left:51px;top:110px;width:29px;height:30px" viewBox="0 0 30 30"><rect width="30" height="30" fill="#62d862"/><circle cx="14.500" cy="15.500" r="12.800" fill="#fff"/><path d="M14 17 V23 " stroke="#f05050" stroke-width=".6"/><path d="M14 17 L20.500 16.500" stroke="#50d050" stroke-width=".6"/><path d="M14 17 L16 15" stroke="#5050f0" stroke-width=".6"/></svg>
<svg class="ico" style="left:87px;top:110px;width:30px;height:30px" viewBox="0 0 30 30"><rect x="0" y="3" width="30" height="24" fill="#fff"/><path d="M1 16.500 L14 4.500 L28.500 7 Q29.500 8 28.500 9.500 L17 24 L15 24.500 L2 19.500Z" fill="#2f8a2a" stroke="#14501a" stroke-width=".7"/><path d="M5 16 L14 7.500 L25 9.500 L16 20.500Z" fill="#1f6a22" opacity=".6"/><path d="M8 14 L20 16 M11 11 L23 13 M12 19 L19 8 M7.500 17 L16 7.500" stroke="#4ab040" stroke-width=".6" stroke-dasharray="1.500 1"/></svg>
<svg class="ico" style="left:124px;top:110px;width:30px;height:30px" viewBox="0 0 30 30"><rect x="0" y="5" width="30" height="20" fill="#fff"/><path d="M8 22.500 V13 L16 7.500 H27 V22.500Z" fill="none" stroke="#f020d8" stroke-width="2"/><path d="M8 22.500 H27" stroke="#c010b0" stroke-width="1.600"/><rect x="12" y="14" width="10" height="6" fill="#2a5a6a"/><path d="M13.500 15 V19 M15.500 15 V19 M17.500 15 V19 M19.500 15 V19" stroke="#cfe" stroke-width=".6"/><path d="M10 13 H22" stroke="#f5e020" stroke-width=".9"/><path d="M4 10 V21 M2 15 H6 M28.500 10 V21 M20 26 V23" stroke="#ccc" stroke-width=".5"/></svg>
<svg class="ico" style="left:161px;top:110px;width:30px;height:30px" viewBox="0 0 30 30"><rect x="0" y="3" width="30" height="24" fill="#fff"/><path d="M3.500 13 C3 7 6 4.500 12 4.500 H22 C27 5 29 8 28.500 9.500 L24 10 L22.500 13Z" fill="none" stroke="#f020d8" stroke-width="1.700"/><path d="M13.500 5 V13 M22.500 6 V12" stroke="#f020d8" stroke-width="1.400"/><path d="M23 6 C27 6.500 29 8.500 28 10 L24 10Z" fill="#f020d8"/><path d="M3 24.500 V18.500 Q3.500 16 8 16 H13 V24.500Z" fill="#c8f5c8" stroke="#90e090" stroke-width=".7"/></svg>
<svg class="ico" style="left:198px;top:110px;width:30px;height:30px" viewBox="0 0 30 30"><rect x="0" y="6" width="17" height="18" fill="#5668e0"/><path d="M16 6 H19 L16.500 24 H13.500Z" fill="#28e0f0"/><path d="M19 6 H30 V24 H16.500Z" fill="#f0b0f0"/><path d="M0 15.500 H30" stroke="#7a88e8" stroke-width=".4"/><g fill="#111"><rect x="2.500" y="15" width="3" height="1.800"/><rect x="11" y="9" width="2.500" height="2"/><rect x="16.500" y="9.500" width="2" height="1.800"/><rect x="26" y="17" width="3" height="1.800"/></g></svg>
<svg class="ico" style="left:235px;top:110px;width:30px;height:30px" viewBox="0 0 30 30"><path d="M1 9.500 C8 9.500 12 11 12 16 V23" fill="none" stroke="#3a7ad8" stroke-width="1.300"/><path d="M29 6.500 C21 6 16.500 9 16.500 14 V20" fill="none" stroke="#3a7ad8" stroke-width="1.300"/><circle cx="6.500" cy="10" r="1.700" fill="#f02020"/><circle cx="12" cy="15" r="1.700" fill="#f02020"/><circle cx="16.800" cy="12.500" r="1.700" fill="#f02020"/><circle cx="23.500" cy="6.500" r="1.700" fill="#f02020"/></svg>
<svg class="ico" style="left:272px;top:110px;width:30px;height:30px" viewBox="0 0 30 30"><rect width="30" height="30" fill="#fff"/><path d="M12 5.500 L20 4 L24 5.500 L20 8 L17 7 L16 10Z" fill="#18c030"/><path d="M15 8 C17 12 14 15 11 17 C9 19 9 22 11 23" fill="none" stroke="#f5a820" stroke-width="1.800"/><ellipse cx="7" cy="20" rx="3.800" ry="6" fill="none" stroke="#e020d0" stroke-width="1.600" transform="rotate(15 7 20)"/><path d="M8 20.500 L17 23 L16 18.500" fill="none" stroke="#f02020" stroke-width=".9"/><circle cx="8" cy="20.500" r="1.200" fill="#f02020"/><circle cx="16.500" cy="22.500" r="1.200" fill="#f02020"/><path d="M8 25 C14 27.500 20 26 23 22.500 L27.500 21" fill="none" stroke="#1830e8" stroke-width="2.200"/></svg>
<svg class="ico" style="left:310px;top:110px;width:30px;height:30px" viewBox="0 0 30 30"><rect x="0" y="0" width="27" height="30" fill="#fff"/><ellipse cx="3.500" cy="21" rx="2.300" ry="5" fill="#5a50b0" stroke="#3a3080" stroke-width=".5"/><path d="M13 3 L16.500 4.500 L11.500 16 L8.500 14.500Z" fill="#20d8a0"/><ellipse cx="14.500" cy="3" rx="2.800" ry="2" fill="#6a50d8"/><path d="M9 15 L12.500 18 L10 21Z" fill="#38e070"/><path d="M7 22.500 L20 23.500 L24 27 L17.500 25 L6 24.500Z" fill="#28d8e8"/><path d="M7 23.500 H24" stroke="#a01880" stroke-width=".7"/><circle cx="23.500" cy="23.500" r="1" fill="#a01880"/></svg>
<svg class="ico" style="left:346px;top:110px;width:30px;height:30px" viewBox="0 0 30 30"><rect x="0" y="2" width="30" height="26" fill="#fff"/><path d="M12 3 L14.500 3.500 L13 24 L10 23.500Z" fill="#30b848"/><path d="M4 14 L23 9 L24 11 L6 16.500Z" fill="#30b848"/><path d="M4 20 L26 14 L27 17 L7 23Z" fill="#6a60c8"/><path d="M8 22 L27 19.500 L27.500 21.500 L9 24.500Z" fill="#4a4098"/><ellipse cx="3" cy="20" rx="2" ry="5" fill="#3030a0"/><ellipse cx="5.500" cy="20" rx="1.500" ry="4" fill="#e8e020"/><path d="M4 25.500 H16" stroke="#a01880" stroke-width=".7"/><circle cx="16" cy="25.500" r="1" fill="#a01880"/><circle cx="27" cy="14" r="1.200" fill="#187868"/></svg>
<svg class="ico" style="left:384px;top:110px;width:28px;height:30px" viewBox="0 0 28 30"><rect x="1" y="7.500" width="26" height="2.200" fill="#222"/><rect x="1" y="25" width="26" height="2.800" fill="#222"/><path d="M9 1 C9 10 6.500 14 7.500 18 M14 1 V17 M19 1 C19 10 21.500 14 20.500 18" fill="none" stroke="#f09050" stroke-width=".7"/><rect x="6" y="17.500" width="16" height="6" rx="1" fill="#f8e098" stroke="#a08a40" stroke-width=".6"/><rect x="8" y="23.500" width="12" height="1.500" fill="#d8c070"/></svg>
<svg class="ico" style="left:420px;top:110px;width:30px;height:30px" viewBox="0 0 30 30"><rect x="0" y="2" width="30" height="25" fill="#8a8a8a"/><rect x="1.500" y="3.500" width="12" height="22" rx="1.500" fill="#c8c8c8" stroke="#555" stroke-width=".6"/><rect x="3.500" y="8" width="8" height="13" fill="#9a9a9a" stroke="#666" stroke-width=".4"/><rect x="16.500" y="3.500" width="12" height="22" rx="1.500" fill="#e8e6dc" stroke="#777" stroke-width=".6"/><circle cx="22.500" cy="6" r=".8" fill="#555"/></svg>
<svg class="ico" style="left:457px;top:110px;width:30px;height:30px" viewBox="0 0 30 30"><rect width="30" height="30" fill="#fff"/><path d="M9 8 L19 3 C26 3 29 12 25 18 L14 25Z" fill="#a84a1a"/><ellipse cx="21.500" cy="10.500" rx="6.500" ry="8" fill="#8a3a10" transform="rotate(-25 21.500 10.500)"/><ellipse cx="10.500" cy="17" rx="7.500" ry="9" fill="#7ac8f0" stroke="#a84a1a" stroke-width="1.600" transform="rotate(-25 10.500 17)"/><path d="M5 12 L16 22 M6 23 L15 11" stroke="#fff" stroke-width=".6"/><path d="M2 18.500 L9 15 L11 19 L4 23Z" fill="#222"/><ellipse cx="3" cy="20.800" rx="1.800" ry="2.500" fill="#444" transform="rotate(-25 3 20.800)"/><path d="M24 8 L27 6.500 L28 8.500 L25 10Z" fill="#222"/></svg>
<svg class="ico" style="left:494px;top:110px;width:30px;height:30px" viewBox="0 0 30 30"><path d="M1 9 C9 10 12.500 13 12.500 20 V28" fill="none" stroke="#3a6ad0" stroke-width="1.100"/><path d="M30 11 C22 11 17.500 14 17.500 20 V28" fill="none" stroke="#3a6ad0" stroke-width="1.100"/><path d="M1 6 L16 9.500" stroke="#3a6ad0" stroke-width=".7" stroke-dasharray="2 1.500"/><path d="M7 8 V12 M6 9.500 L7 8 L8 9.500 M12.500 22 H17.500 M13.800 21 L12.500 22 L13.800 23 M16.200 21 L17.500 22 L16.200 23" fill="none" stroke="#f02020" stroke-width=".9"/></svg>
<svg class="ico" style="left:531px;top:110px;width:30px;height:30px" viewBox="0 0 30 30"><path d="M0 0 H9 V28 H0Z" fill="#3a6ad0"/><path d="M19 1 H29 L25.500 28 H16.500Z" fill="#3a6ad0"/><path d="M9 2.500 H19 M10.500 1.300 L9 2.500 L10.500 3.700 M17.500 1.300 L19 2.500 L17.500 3.700 M9 26 H16.500 M10.500 24.800 L9 26 L10.500 27.200 M15 24.800 L16.500 26 L15 27.200" fill="none" stroke="#f02020" stroke-width="1"/></svg>
<svg class="ico" style="left:569px;top:110px;width:30px;height:30px" viewBox="0 0 30 30"><path d="M7 4 H23 M0 15 H29 M7 26 H23" stroke="#3a6ad0" stroke-width="2"/></svg>
<svg class="ico" style="left:605px;top:110px;width:30px;height:30px" viewBox="0 0 30 30"><rect width="30" height="30" fill="#fff"/><text x="1" y="21.500" font-size="16.500" font-weight="bold" font-family="Liberation Sans,sans-serif" fill="#fff" stroke="#d85050" stroke-width=".8" textLength="28" lengthAdjust="spacingAndGlyphs">321</text></svg>
<svg class="ico" style="left:643px;top:110px;width:28px;height:30px" viewBox="0 0 28 28"><text x="14" y="13" font-size="11" font-weight="bold" font-family="Liberation Sans,sans-serif" fill="#f0b088" text-anchor="middle">Auto</text><text x="14" y="25" font-size="11" font-weight="bold" font-family="Liberation Sans,sans-serif" fill="#f0b088" text-anchor="middle">Tol.</text></svg>
<svg class="ico" style="left:679px;top:110px;width:30px;height:30px" viewBox="0 0 30 30"><rect x="0" y="2" width="30" height="25" fill="#b4b4b4"/><path d="M0 17 L12 13" stroke="#fff" stroke-width=".8"/><path d="M15 3 L28.500 25 H1.500Z" fill="#e8f0ec" stroke="#9aa8a0" stroke-width=".7"/><path d="M19 12 L30 14 L30 15.500 L19.500 13Z" fill="#f03030"/><path d="M19.500 13 L30 15.500 V17 L20 14Z" fill="#f5e020"/><path d="M20 14 L30 17 V18.500 L20.500 15Z" fill="#30c040"/><path d="M20.500 15 L30 18.500 V20 L21 16Z" fill="#3050e8"/></svg>
<div class="abs" style="left:1879px;top:146px;width:1px;height:821px;background:#fff"></div><div class="abs" style="left:1879px;top:967px;width:40px;height:1px;background:#a0a0a0"></div>
<i class="abs" style="left:1884px;top:150px;width:1px;height:1px;background:#a0a0a0;box-shadow:-1px -1px 0 #fff,-1px 0 0 #cdcdcd,0 -1px 0 #cdcdcd"></i><i class="abs" style="left:1888px;top:150px;width:1px;height:1px;background:#a0a0a0;box-shadow:-1px -1px 0 #fff,-1px 0 0 #cdcdcd,0 -1px 0 #cdcdcd"></i><i class="abs" style="left:1892px;top:150px;width:1px;height:1px;background:#a0a0a0;box-shadow:-1px -1px 0 #fff,-1px 0 0 #cdcdcd,0 -1px 0 #cdcdcd"></i><i class="abs" style="left:1896px;top:150px;width:1px;height:1px;background:#a0a0a0;box-shadow:-1px -1px 0 #fff,-1px 0 0 #cdcdcd,0 -1px 0 #cdcdcd"></i><i class="abs" style="left:1900px;top:150px;width:1px;height:1px;background:#a0a0a0;box-shadow:-1px -1px 0 #fff,-1px 0 0 #cdcdcd,0 -1px 0 #cdcdcd"></i><i class="abs" style="left:1904px;top:150px;width:1px;height:1px;background:#a0a0a0;box-shadow:-1px -1px 0 #fff,-1px 0 0 #cdcdcd,0 -1px 0 #cdcdcd"></i><i class="abs" style="left:1908px;top:150px;width:1px;height:1px;background:#a0a0a0;box-shadow:-1px -1px 0 #fff,-1px 0 0 #cdcdcd,0 -1px 0 #cdcdcd"></i><i class="abs" style="left:1912px;top:150px;width:1px;height:1px;background:#a0a0a0;box-shadow:-1px -1px 0 #fff,-1px 0 0 #cdcdcd,0 -1px 0 #cdcdcd"></i><i class="abs" style="left:1916px;top:150px;width:1px;height:1px;background:#a0a0a0;box-shadow:-1px -1px 0 #fff,-1px 0 0 #cdcdcd,0 -1px 0 #cdcdcd"></i>
<svg class="ico" style="left:1886px;top:161px;width:24px;height:24px" viewBox="0 0 24 24"><path d="M6 17 L21 3 M16.500 3 H21 V7.500" fill="none" stroke="#222" stroke-width="1"/><circle cx="4.500" cy="18.500" r="3.700" fill="#f5ca8c" stroke="#f41a1a" stroke-width="1"/></svg>
<svg class="ico" style="left:1886px;top:197px;width:24px;height:24px" viewBox="0 0 24 24"><ellipse cx="13.500" cy="12" rx="11.500" ry="11.500" fill="#d8a868" stroke="#8a6434" stroke-width=".6"/><ellipse cx="11.500" cy="12" rx="11.500" ry="11.500" fill="#f5ca8c" stroke="#f41a1a" stroke-width=".8"/><path d="M1 12 H22 M2.500 11 L1 12 L2.500 13 M20.500 11 L22 12 L20.500 13" fill="none" stroke="#8a6434" stroke-width=".7"/></svg>
<svg class="ico" style="left:1886px;top:233px;width:24px;height:24px" viewBox="0 0 24 24"><path d="M-1 12.500 L10 2.500 L25.500 11.500 L14 22Z" fill="#f5ca8c" stroke="#8a6434" stroke-width=".7"/><path d="M10 3 L16 21 M10 3 L25 11.500" fill="none" stroke="#333" stroke-width=".6"/><circle cx="10" cy="2.800" r="1.800" fill="#f04040" stroke="#a01010" stroke-width=".4"/><circle cx="16" cy="21" r="1.800" fill="#f04040" stroke="#a01010" stroke-width=".4"/></svg>
<svg class="ico" style="left:1886px;top:269px;width:24px;height:24px" viewBox="0 0 24 24"><path d="M0 13 L23 1" stroke="#f41a1a" stroke-width="1"/><path d="M0 22.500 H24" stroke="#f41a1a" stroke-width="1"/><path d="M12.500 7 V22" stroke="#888" stroke-width=".7"/><rect x="11" y="5.500" width="3" height="3" fill="#f5ca8c" stroke="#8a6434" stroke-width=".4"/><rect x="11" y="19.500" width="3" height="3" fill="#f5ca8c" stroke="#8a6434" stroke-width=".4"/></svg>
<svg class="ico" style="left:1886px;top:305px;width:24px;height:24px" viewBox="0 0 24 24"><path d="M3 .500 H25 L22 8 H0Z" fill="#f5ca8c" stroke="#8a6434" stroke-width=".6"/><path d="M3 6.500 L22 2" stroke="#f41a1a" stroke-width=".6"/><path d="M3 16 H25 L22 24 H0Z" fill="#f41a1a" stroke="#a01010" stroke-width=".5"/><path d="M12.500 4.500 V20" stroke="#222" stroke-width=".7"/><circle cx="12.500" cy="4.500" r="1" fill="#222"/><circle cx="12.500" cy="20" r="1" fill="#222"/></svg>
<svg class="ico" style="left:1886px;top:341px;width:24px;height:24px" viewBox="0 0 24 24"><path d="M1 20.500 L13 .500 L14.500 1.500 L5 20.500Z" fill="#e8b878" stroke="#8a6434" stroke-width=".5"/><path d="M2.500 20 L9 9 C12 10.500 14 15 13.500 20Z" fill="#f41a1a"/><path d="M11 7 C15 9 17 14 16.500 19 M15.500 17.500 L16.500 19.500 L17.500 17.500" fill="none" stroke="#222" stroke-width=".7"/><rect x="1" y="20" width="23" height="2" fill="#f5ca8c" stroke="#8a6434" stroke-width=".5"/></svg>
<svg class="ico" style="left:1886px;top:377px;width:24px;height:24px" viewBox="0 0 24 24"><path d="M-1 10 L9 .500 L13 13 L3 22.500Z" fill="#e8b878" stroke="#8a6434" stroke-width=".6"/><path d="M3 22.500 L13 13 L26 11.500 L17 22Z" fill="#f5ca8c" stroke="#8a6434" stroke-width=".6"/><path d="M7 13.500 L12 13.500 L13.500 17 L9.500 18.500Z" fill="#f41a1a"/><path d="M8.500 10.500 C11 10 13 11.500 14 14.500 M13 13.500 L14.200 15 L15 13" fill="none" stroke="#222" stroke-width=".7"/></svg>
<svg class="ico" style="left:1886px;top:413px;width:24px;height:24px" viewBox="0 0 24 24"><path d="M0 16 L12 7.500 L25 16 L12.500 25Z" fill="#f5ca8c" stroke="#8a6434" stroke-width=".6"/><path d="M12 3 V18" stroke="#e8d8b8" stroke-width="1"/><path d="M12.500 3 C16 .500 19 3 18.500 7 M20 1 L22 .500 L21.500 2.500 M11 2 L13 1.500" fill="none" stroke="#1a6a7a" stroke-width=".8"/><ellipse cx="18.500" cy="8" rx="2.300" ry="1.400" fill="#f41a1a" transform="rotate(-20 18.500 8)"/><path d="M19 5 L22 1" stroke="#222" stroke-width=".6"/></svg>
<svg class="ico" style="left:1886px;top:449px;width:24px;height:24px" viewBox="0 0 24 24"><circle cx="19" cy="12" r="6" fill="#f5ca8c" stroke="#8a6434" stroke-width=".6"/><circle cx="8" cy="12" r="8" fill="#f8f0e0" stroke="#8a6434" stroke-width=".6"/><circle cx="8" cy="12" r="5.500" fill="#f5ca8c" stroke="#8a6434" stroke-width=".6"/><circle cx="8" cy="12" r="4" fill="#f8f0e0"/><circle cx="7.500" cy="12" r="1.600" fill="#f41a1a"/><circle cx="19.500" cy="12" r="2.300" fill="#f41a1a"/><path d="M9.500 12 H17" stroke="#222" stroke-width=".5"/></svg>
<svg class="ico" style="left:1886px;top:485px;width:24px;height:24px" viewBox="0 0 24 24"><circle cx="12" cy="12" r="12.200" fill="#f5ca8c" stroke="#f41a1a" stroke-width=".6" stroke-dasharray="1 1"/><ellipse cx="12" cy="12" rx="7" ry="8.500" fill="none" stroke="#8a6434" stroke-width=".6"/><ellipse cx="12" cy="12" rx="11" ry="6.500" fill="none" stroke="#8a6434" stroke-width=".5"/><circle cx="12" cy="12.500" r="4.500" fill="#f41a1a"/></svg>
<svg class="ico" style="left:1886px;top:521px;width:24px;height:24px" viewBox="0 0 24 24"><ellipse cx="14" cy="12" rx="10.500" ry="9.500" fill="#f5ca8c" stroke="#8a6434" stroke-width=".6"/><ellipse cx="10.500" cy="12" rx="9.500" ry="9.500" fill="#f8f4f0" stroke="#444" stroke-width=".8"/><circle cx="11" cy="12" r="6.500" fill="#f41a1a"/><path d="M1 12 H5" stroke="#222" stroke-width=".6"/></svg>
<svg class="ico" style="left:1886px;top:557px;width:24px;height:24px" viewBox="0 0 24 24"><path d="M2.500 1 H21.500 L25 6 H-1Z" fill="#f5ca8c" stroke="#8a6434" stroke-width=".6"/><rect x="-1" y="6" width="26" height="2.200" fill="#d8a868" stroke="#8a6434" stroke-width=".5"/><rect x="5" y="8.200" width="3.500" height="5.500" fill="#f5ca8c" stroke="#8a6434" stroke-width=".5"/><rect x="15.500" y="8.200" width="3.500" height="5.500" fill="#f5ca8c" stroke="#8a6434" stroke-width=".5"/><path d="M2.500 13 H21.500 L25 18 H-1Z" fill="#f04040" stroke="#a01010" stroke-width=".5"/><rect x="-1" y="18" width="26" height="5" fill="#f41a1a" stroke="#a01010" stroke-width=".5"/><ellipse cx="6.800" cy="15" rx="2.600" ry="1.200" fill="#f5ca8c" stroke="#8a6434" stroke-width=".4"/><ellipse cx="17.300" cy="15" rx="2.600" ry="1.200" fill="#f5ca8c" stroke="#8a6434" stroke-width=".4"/></svg>
<svg class="ico" style="left:1886px;top:593px;width:24px;height:24px" viewBox="0 0 24 24"><text x="12" y="20.500" font-size="23" font-weight="bold" font-family="Liberation Sans,sans-serif" fill="#f5ca8c" stroke="#a01818" stroke-width=".7" text-anchor="middle" letter-spacing="-1.5">Fx</text></svg>
<svg class="ico" style="left:1886px;top:629px;width:24px;height:24px" viewBox="0 0 24 24"><path d="M12 8 V12.500 M5 16 V12.500 H19 V16" fill="none" stroke="#888" stroke-width=".7"/><circle cx="12" cy="4.500" r="4.300" fill="#f0783a" stroke="#a8481a" stroke-width=".5"/><circle cx="10.800" cy="3.300" r="1.500" fill="#f8b088"/><path d="M1 16.500 L5.500 15 L10 16.500 V22.500 L5.500 24 L1 22.500Z" fill="#e8b848" stroke="#8a6a14" stroke-width=".5"/><path d="M1 16.500 L5.500 18 L10 16.500 M5.500 18 V24" fill="none" stroke="#8a6a14" stroke-width=".4"/><path d="M14 16.500 L18.500 15 L23 16.500 V22.500 L18.500 24 L14 22.500Z" fill="#e8b848" stroke="#8a6a14" stroke-width=".5"/><path d="M14 16.500 L18.500 18 L23 16.500 M18.500 18 V24" fill="none" stroke="#8a6a14" stroke-width=".4"/></svg>
<svg class="ico" style="left:1886px;top:665px;width:24px;height:24px" viewBox="0 0 24 24"><text x="1" y="13.200" textLength="23" lengthAdjust="spacingAndGlyphs" font-size="12" font-weight="bold" font-family="Liberation Sans,sans-serif" fill="#b81c1c" stroke="#7a0c0c" stroke-width=".3" >Null</text><rect x="1" y="15.500" width="17" height="2.300" fill="#f3c95c" stroke="#c8922a" stroke-width=".4"/><rect x="1" y="20" width="10.500" height="2.300" fill="#f3c95c" stroke="#c8922a" stroke-width=".4"/></svg>
<svg class="ico" style="left:1886px;top:701px;width:24px;height:24px" viewBox="0 0 24 24"><path d="M1 5 L9 8.500 V15.500 L1 11Z" fill="#e8c838" stroke="#a08a14" stroke-width=".5"/><path d="M2 7 L8 14 M2 10 L6 14" stroke="#fff8c0" stroke-width=".8"/><g fill="#e8e060" stroke="#a0982a" stroke-width=".4"><rect x="11" y="3" width="9" height="2.800"/><rect x="11" y="7.200" width="9" height="2.800"/><rect x="11" y="11.400" width="9" height="2.800"/><rect x="11" y="15.600" width="9" height="2.800"/><rect x="11" y="19.800" width="9" height="2.800"/></g></svg>
<div class="abs" style="left:0;top:146px;width:300px;height:19px;background:#dadada;border:1px solid #c6c6c6"></div><div class="abs ui" style="left:5px;top:149px">目录树</div><svg class="abs" style="left:270px;top:150px;width:28px;height:12px" viewBox="0 0 28 12"><path d="M3.500 4 V1.500 H9 V6.500 H7 M1.500 4.500 H7 V9.500 H1.500Z" fill="none" stroke="#000" stroke-width="1.700"/><path d="M1.500 5 H7" stroke="#000" stroke-width="2.200"/><path d="M17.500 2 L24.500 9 M24.500 2 L17.500 9" stroke="#000" stroke-width="1.900"/></svg><div class="abs" style="left:1px;top:171px;width:203px;height:18px;background:#fff;border:1px solid #c6c6c6;border-radius:4px"></div><svg class="abs" style="left:9px;top:173px;width:13px;height:14px" viewBox="0 0 13 14"><circle cx="8" cy="5" r="3.200" fill="none" stroke="#8a9ad0" stroke-width="2"/><path d="M5.500 8 L2 12" stroke="#8a9ad0" stroke-width="2.200" stroke-linecap="round"/></svg><div class="abs ui" style="left:29px;top:173px;color:#a0a0a0">搜索</div><div class="abs" style="left:210px;top:167px;width:42px;height:26px;background:#f1f1f1;border:1px solid #8c8c8c;border-radius:4px"></div><svg class="abs" style="left:223px;top:172.600px;width:14px;height:14.500px" viewBox="0 0 14 14.500"><path d="M3.500 0 H10.500 V7.200 H14 L7 14.500 L0 7.200 H3.500Z" fill="#00a2e8"/></svg><div class="abs" style="left:258px;top:167px;width:42px;height:26px;background:#f1f1f1;border:1px solid #8c8c8c;border-radius:4px"></div><svg class="abs" style="left:271.3px;top:172.600px;width:14px;height:14.500px" viewBox="0 0 14 14.500"><path d="M7 0 L14 7.300 H10.500 V14.500 H3.500 V7.300 H0Z" fill="#00a2e8"/></svg><div class="abs" style="left:1px;top:200px;width:298px;height:767px;background:#fff"></div><div class="abs" style="left:178px;top:200px;width:1px;height:20px;background:#e6e6e6"></div><div class="abs" style="left:238px;top:200px;width:1px;height:20px;background:#e6e6e6"></div><div class="abs" style="left:297px;top:200px;width:1px;height:20px;background:#e6e6e6"></div><div class="abs ui" style="left:5px;top:203px">名称</div><div class="abs ui" style="left:183px;top:203px">图标</div><div class="abs ui" style="left:243px;top:203px">数量</div><div class="abs" style="left:81px;top:336px;width:218px;height:29px;background:#0078d7"></div><div class="tl" style="left:30px;top:278px;width:2px;height:87px"></div><div class="tl" style="left:30px;top:394px;width:2px;height:87px"></div><div class="tl" style="left:50px;top:278px;width:2px;height:29px"></div><div class="th" style="left:50px;top:291px;width:11px"></div><div class="tl" style="left:50px;top:394px;width:2px;height:29px"></div><div class="th" style="left:50px;top:407px;width:11px"></div><div class="tl" style="left:70px;top:336px;width:2px;height:15px"></div><div class="th" style="left:70px;top:349px;width:11px"></div><div class="tl" style="left:70px;top:452px;width:2px;height:15px"></div><div class="th" style="left:70px;top:465px;width:11px"></div><div class="tl" style="left:50px;top:510px;width:2px;height:15px"></div><div class="th" style="left:50px;top:523px;width:11px"></div><div class="tb" style="left:4px;top:227px"></div><svg class="ico" style="left:26px;top:223px;width:22px;height:23px" viewBox="0 0 22 23"><path d="M11 0.20 L14.74 2.35 L11 4.5 L7.26 2.35Z" fill="#f8e0a0" stroke="#5a4010" stroke-width=".45" stroke-linejoin="round"/><path d="M7.26 2.35 L11 4.5 V8.80 L7.26 6.65Z" fill="#e8b848" stroke="#5a4010" stroke-width=".45" stroke-linejoin="round"/><path d="M14.74 2.35 L11 4.5 V8.80 L14.74 6.65Z" fill="#c8922a" stroke="#5a4010" stroke-width=".45" stroke-linejoin="round"/><path d="M4.2 3.70 L7.94 5.85 L4.2 8 L0.46 5.85Z" fill="#5af0f8" stroke="#0a4a58" stroke-width=".45" stroke-linejoin="round"/><path d="M0.46 5.85 L4.2 8 V12.30 L0.46 10.15Z" fill="#18c8d8" stroke="#0a4a58" stroke-width=".45" stroke-linejoin="round"/><path d="M7.94 5.85 L4.2 8 V12.30 L7.94 10.15Z" fill="#0e98a8" stroke="#0a4a58" stroke-width=".45" stroke-linejoin="round"/><path d="M17.8 3.70 L21.54 5.85 L17.8 8 L14.06 5.85Z" fill="#5af0f8" stroke="#0a4a58" stroke-width=".45" stroke-linejoin="round"/><path d="M14.06 5.85 L17.8 8 V12.30 L14.06 10.15Z" fill="#18c8d8" stroke="#0a4a58" stroke-width=".45" stroke-linejoin="round"/><path d="M21.54 5.85 L17.8 8 V12.30 L21.54 10.15Z" fill="#0e98a8" stroke="#0a4a58" stroke-width=".45" stroke-linejoin="round"/><path d="M11 6.90 L14.74 9.05 L11 11.2 L7.26 9.05Z" fill="#5af0f8" stroke="#0a4a58" stroke-width=".45" stroke-linejoin="round"/><path d="M7.26 9.05 L11 11.2 V15.50 L7.26 13.35Z" fill="#18c8d8" stroke="#0a4a58" stroke-width=".45" stroke-linejoin="round"/><path d="M14.74 9.05 L11 11.2 V15.50 L14.74 13.35Z" fill="#0e98a8" stroke="#0a4a58" stroke-width=".45" stroke-linejoin="round"/><path d="M4.2 10.70 L7.94 12.85 L4.2 15 L0.46 12.85Z" fill="#f8e0a0" stroke="#5a4010" stroke-width=".45" stroke-linejoin="round"/><path d="M0.46 12.85 L4.2 15 V19.30 L0.46 17.15Z" fill="#e8b848" stroke="#5a4010" stroke-width=".45" stroke-linejoin="round"/><path d="M7.94 12.85 L4.2 15 V19.30 L7.94 17.15Z" fill="#c8922a" stroke="#5a4010" stroke-width=".45" stroke-linejoin="round"/><path d="M17.8 10.70 L21.54 12.85 L17.8 15 L14.06 12.85Z" fill="#f8e0a0" stroke="#5a4010" stroke-width=".45" stroke-linejoin="round"/><path d="M14.06 12.85 L17.8 15 V19.30 L14.06 17.15Z" fill="#e8b848" stroke="#5a4010" stroke-width=".45" stroke-linejoin="round"/><path d="M21.54 12.85 L17.8 15 V19.30 L21.54 17.15Z" fill="#c8922a" stroke="#5a4010" stroke-width=".45" stroke-linejoin="round"/><path d="M11 14.40 L14.74 16.55 L11 18.7 L7.26 16.55Z" fill="#5af0f8" stroke="#0a4a58" stroke-width=".45" stroke-linejoin="round"/><path d="M7.26 16.55 L11 18.7 V23.00 L7.26 20.85Z" fill="#18c8d8" stroke="#0a4a58" stroke-width=".45" stroke-linejoin="round"/><path d="M14.74 16.55 L11 18.7 V23.00 L14.74 20.85Z" fill="#0e98a8" stroke="#0a4a58" stroke-width=".45" stroke-linejoin="round"/></svg><div class="abs ui" style="left:55px;top:227px;color:#000;font-size:13px">Product</div><div class="abs ui" style="left:242px;top:227px;font-size:13px">2</div><div class="tb" style="left:24px;top:256px"></div><svg class="ico" style="left:47px;top:254px;width:18px;height:18px" viewBox="0 0 18 18"><path d="M8.500 16 L14.500 13.500 L17.300 5.500 L17.800 6.500 L15 15.300 L9 17.800Z" fill="#3a5a4a" stroke="#1a3a3a" stroke-width=".3"/><path d="M.500 10.300 L5.300 8 L7.500 12.500 L3 15Z" fill="#22e8f0" stroke="#0a5a68" stroke-width=".45"/><path d="M3 15 L7.500 12.500 L8.500 16 L4.500 17Z" fill="#12a8b8" stroke="#0a5a68" stroke-width=".4"/><path d="M10.500 2.500 L16 .500 L17.300 5.500 L12 7.800Z" fill="#22e8f0" stroke="#0a5a68" stroke-width=".45"/><path d="M6.800 10.500 L12.500 8 L14.500 13.500 L8.500 16Z" fill="#f0dca0" stroke="#5a4a20" stroke-width=".45"/><path d="M12.500 8 L13.800 7.300 L15.500 12.500 L14.500 13.500Z" fill="#c8a860" stroke="#5a4a20" stroke-width=".35"/></svg><div class="abs ui" style="left:75px;top:256px;color:#000;font-size:12px">多边形</div><svg class="ico" style="left:189px;top:258px;width:11px;height:12px" viewBox="0 0 11 12"><path d="M.300 2.600 Q5.500 -.500 10.700 2.600 V9.600 L7.800 11.600 Q5.500 10 3.200 11.600 L.300 9.600Z" fill="#a8dcfc" stroke="#3a5a7a" stroke-width=".6"/><path d="M7.800 4 L10.700 2.600 V9.600 L7.800 11.600Z" fill="#68b0f0"/><path d="M.300 2.600 Q5.500 -.500 10.700 2.600 L7.800 4.200 Q5.500 2.400 3.200 4.200Z" fill="#78ccfc" stroke="#2a4a6a" stroke-width=".5"/><path d="M3.200 4.200 Q5.500 2.200 7.800 4.200 V11.400 Q5.500 10 3.200 11.400Z" fill="#b4e020" stroke="#5a7a10" stroke-width=".5"/></svg><svg class="ico" style="left:67px;top:283px;width:19px;height:19px" viewBox="0 0 24 24"><path d="M12 .500 L18 9.500 H6Z" fill="#fbe8a0" stroke="#0f6e7a" stroke-width=".6"/><path d="M12 .500 L14.500 9.500 H18Z" fill="#f0a820"/><path d="M12 .500 L14 9.500" stroke="#0f6e7a" stroke-width=".5"/><rect x="1.500" y="12" width="10" height="10.500" fill="#52f5e8" stroke="#0f6e7a" stroke-width=".6"/><circle cx="18.500" cy="17.500" r="5.300" fill="#14b0a8" stroke="#0f6e7a" stroke-width=".6"/></svg><div class="abs ui" style="left:95px;top:285px;color:#000;font-size:12px">多边形</div><div class="tb" style="left:44px;top:314px"></div><svg class="ico" style="left:67px;top:312px;width:18px;height:18px" viewBox="0 0 18 18"><g transform="translate(.500 1) scale(.78 .85)"><path d="M.300 2.600 Q5.500 -.500 10.700 2.600 V9.600 L7.800 11.600 Q5.500 10 3.200 11.600 L.300 9.600Z" fill="#a8dcfc" stroke="#3a5a7a" stroke-width=".6"/><path d="M7.800 4 L10.700 2.600 V9.600 L7.800 11.600Z" fill="#68b0f0"/><path d="M.300 2.600 Q5.500 -.500 10.700 2.600 L7.800 4.200 Q5.500 2.400 3.200 4.200Z" fill="#78ccfc" stroke="#2a4a6a" stroke-width=".5"/><path d="M3.200 4.200 Q5.500 2.200 7.800 4.200 V11.400 Q5.500 10 3.200 11.400Z" fill="#b4e020" stroke="#5a7a10" stroke-width=".5"/></g><path d="M11.800 3.400 H17 M11.800 7 H17 M9 11.500 H17" stroke="#6aa8d8" stroke-width="1.500" stroke-linecap="round"/><path d="M3 16.500 H17" stroke="#4a88b8" stroke-width="1.700" stroke-linecap="round"/></svg><div class="abs ui" style="left:93px;top:314px;color:#000;font-size:12px">特征集</div><svg class="ico" style="left:189px;top:316px;width:11px;height:12px" viewBox="0 0 11 12"><path d="M.300 2.600 Q5.500 -.500 10.700 2.600 V9.600 L7.800 11.600 Q5.500 10 3.200 11.600 L.300 9.600Z" fill="#a8dcfc" stroke="#3a5a7a" stroke-width=".6"/><path d="M7.800 4 L10.700 2.600 V9.600 L7.800 11.600Z" fill="#68b0f0"/><path d="M.300 2.600 Q5.500 -.500 10.700 2.600 L7.800 4.200 Q5.500 2.400 3.200 4.200Z" fill="#78ccfc" stroke="#2a4a6a" stroke-width=".5"/><path d="M3.200 4.200 Q5.500 2.200 7.800 4.200 V11.400 Q5.500 10 3.200 11.400Z" fill="#b4e020" stroke="#5a7a10" stroke-width=".5"/></svg><div class="abs ui" style="left:242px;top:314px;font-size:13px">1</div><svg class="ico" style="left:84px;top:340px;width:24px;height:21px" viewBox="0 0 27 24"><defs><linearGradient id="gp2" x1="0" y1="0" x2="1" y2="1"><stop offset="0" stop-color="#a9d9fa"/><stop offset="1" stop-color="#58b0f2"/></linearGradient></defs><path d="M13.500 7.500 L27 15.500 L13.500 23.700 L0 15.500Z" fill="url(#gp2)" stroke="#4a9ee0" stroke-width=".6"/><path d="M13.500 15.500 V2 M11.300 4.600 L13.500 1.800 L15.700 4.600" fill="none" stroke="#f0606c" stroke-width=".9"/><ellipse cx="13.500" cy="15.700" rx="1.400" ry="1" fill="#ee8a5a"/></svg><div class="abs ui" style="left:114px;top:343px;color:#fff;font-size:13px">O1</div><div class="tb" style="left:24px;top:372px"></div><svg class="ico" style="left:47px;top:370px;width:18px;height:18px" viewBox="0 0 18 18"><path d="M8.500 16 L14.500 13.500 L17.300 5.500 L17.800 6.500 L15 15.300 L9 17.800Z" fill="#3a5a4a" stroke="#1a3a3a" stroke-width=".3"/><path d="M.500 10.300 L5.300 8 L7.500 12.500 L3 15Z" fill="#22e8f0" stroke="#0a5a68" stroke-width=".45"/><path d="M3 15 L7.500 12.500 L8.500 16 L4.500 17Z" fill="#12a8b8" stroke="#0a5a68" stroke-width=".4"/><path d="M10.500 2.500 L16 .500 L17.300 5.500 L12 7.800Z" fill="#22e8f0" stroke="#0a5a68" stroke-width=".45"/><path d="M6.800 10.500 L12.500 8 L14.500 13.500 L8.500 16Z" fill="#f0dca0" stroke="#5a4a20" stroke-width=".45"/><path d="M12.500 8 L13.800 7.300 L15.500 12.500 L14.500 13.500Z" fill="#c8a860" stroke="#5a4a20" stroke-width=".35"/></svg><div class="abs ui" style="left:75px;top:372px;color:#000;font-size:12px">基座</div><svg class="ico" style="left:189px;top:374px;width:11px;height:12px" viewBox="0 0 11 12"><path d="M.300 2.600 Q5.500 -.500 10.700 2.600 V9.600 L7.800 11.600 Q5.500 10 3.200 11.600 L.300 9.600Z" fill="#a8dcfc" stroke="#3a5a7a" stroke-width=".6"/><path d="M7.800 4 L10.700 2.600 V9.600 L7.800 11.600Z" fill="#68b0f0"/><path d="M.300 2.600 Q5.500 -.500 10.700 2.600 L7.800 4.200 Q5.500 2.400 3.200 4.200Z" fill="#78ccfc" stroke="#2a4a6a" stroke-width=".5"/><path d="M3.200 4.200 Q5.500 2.200 7.800 4.200 V11.400 Q5.500 10 3.200 11.400Z" fill="#b4e020" stroke="#5a7a10" stroke-width=".5"/></svg><svg class="ico" style="left:67px;top:399px;width:19px;height:19px" viewBox="0 0 24 24"><path d="M12 .500 L18 9.500 H6Z" fill="#fbe8a0" stroke="#0f6e7a" stroke-width=".6"/><path d="M12 .500 L14.500 9.500 H18Z" fill="#f0a820"/><path d="M12 .500 L14 9.500" stroke="#0f6e7a" stroke-width=".5"/><rect x="1.500" y="12" width="10" height="10.500" fill="#52f5e8" stroke="#0f6e7a" stroke-width=".6"/><circle cx="18.500" cy="17.500" r="5.300" fill="#14b0a8" stroke="#0f6e7a" stroke-width=".6"/></svg><div class="abs ui" style="left:95px;top:401px;color:#000;font-size:12px">基座</div><div class="tb" style="left:44px;top:430px"></div><svg class="ico" style="left:67px;top:428px;width:18px;height:18px" viewBox="0 0 18 18"><g transform="translate(.500 1) scale(.78 .85)"><path d="M.300 2.600 Q5.500 -.500 10.700 2.600 V9.600 L7.800 11.600 Q5.500 10 3.200 11.600 L.300 9.600Z" fill="#a8dcfc" stroke="#3a5a7a" stroke-width=".6"/><path d="M7.800 4 L10.700 2.600 V9.600 L7.800 11.600Z" fill="#68b0f0"/><path d="M.300 2.600 Q5.500 -.500 10.700 2.600 L7.800 4.200 Q5.500 2.400 3.200 4.200Z" fill="#78ccfc" stroke="#2a4a6a" stroke-width=".5"/><path d="M3.200 4.200 Q5.500 2.200 7.800 4.200 V11.400 Q5.500 10 3.200 11.400Z" fill="#b4e020" stroke="#5a7a10" stroke-width=".5"/></g><path d="M11.800 3.400 H17 M11.800 7 H17 M9 11.500 H17" stroke="#6aa8d8" stroke-width="1.500" stroke-linecap="round"/><path d="M3 16.500 H17" stroke="#4a88b8" stroke-width="1.700" stroke-linecap="round"/></svg><div class="abs ui" style="left:93px;top:430px;color:#000;font-size:12px">特征集</div><svg class="ico" style="left:189px;top:432px;width:11px;height:12px" viewBox="0 0 11 12"><path d="M.300 2.600 Q5.500 -.500 10.700 2.600 V9.600 L7.800 11.600 Q5.500 10 3.200 11.600 L.300 9.600Z" fill="#a8dcfc" stroke="#3a5a7a" stroke-width=".6"/><path d="M7.800 4 L10.700 2.600 V9.600 L7.800 11.600Z" fill="#68b0f0"/><path d="M.300 2.600 Q5.500 -.500 10.700 2.600 L7.800 4.200 Q5.500 2.400 3.200 4.200Z" fill="#78ccfc" stroke="#2a4a6a" stroke-width=".5"/><path d="M3.200 4.200 Q5.500 2.200 7.800 4.200 V11.400 Q5.500 10 3.200 11.400Z" fill="#b4e020" stroke="#5a7a10" stroke-width=".5"/></svg><div class="abs ui" style="left:242px;top:430px;font-size:13px">1</div><svg class="ico" style="left:84px;top:456px;width:24px;height:21px" viewBox="0 0 27 24"><defs><linearGradient id="gp2" x1="0" y1="0" x2="1" y2="1"><stop offset="0" stop-color="#a9d9fa"/><stop offset="1" stop-color="#58b0f2"/></linearGradient></defs><path d="M13.500 7.500 L27 15.500 L13.500 23.700 L0 15.500Z" fill="url(#gp2)" stroke="#4a9ee0" stroke-width=".6"/><path d="M13.500 15.500 V2 M11.300 4.600 L13.500 1.800 L15.700 4.600" fill="none" stroke="#f0606c" stroke-width=".9"/><ellipse cx="13.500" cy="15.700" rx="1.400" ry="1" fill="#ee8a5a"/></svg><div class="abs ui" style="left:114px;top:459px;color:#000;font-size:13px">T1</div><div class="tb" style="left:24px;top:488px"></div><svg class="ico" style="left:45px;top:484px;width:23px;height:23px" viewBox="0 0 24 24"><g fill="#38e6e0" stroke="#0f8e9a" stroke-width=".7"><rect x="10" y="-.5" width="5" height="5" rx="1"/><rect x="10" y="19.500" width="5" height="5" rx="1"/><rect x="0" y="9.500" width="5" height="5" rx="1"/><rect x="19.500" y="9.500" width="5" height="5" rx="1"/><rect x="2.800" y="2.800" width="5" height="5" rx="1" transform="rotate(45 5.300 5.300)"/><rect x="16.500" y="2.800" width="5" height="5" rx="1" transform="rotate(45 19 5.300)"/><rect x="2.800" y="16.500" width="5" height="5" rx="1" transform="rotate(45 5.300 19)"/><rect x="16.500" y="16.500" width="5" height="5" rx="1" transform="rotate(45 19 19)"/></g><circle cx="12.300" cy="12" r="8.200" fill="#f0f0f0" stroke="#38e6e0" stroke-width="3.400"/><circle cx="12.300" cy="12" r="9.900" fill="none" stroke="#0f8e9a" stroke-width=".6"/><circle cx="12.300" cy="12" r="6.500" fill="none" stroke="#0f8e9a" stroke-width=".6"/><path d="M13 13 L20.500 20.500" stroke="#a01c24" stroke-width="4.600" stroke-linecap="round"/><circle cx="10.800" cy="10.800" r="4.500" fill="#a01c24"/><path d="M13 13 L20.500 20.500" stroke="#f0545a" stroke-width="3.500" stroke-linecap="round"/><circle cx="10.800" cy="10.800" r="3.900" fill="#f0545a"/><path d="M11.300 11.300 L6.200 10 L9.800 6.400Z" fill="#f0f0f0"/><path d="M6.800 10.200 L11.300 11.300 L10 6.800" fill="none" stroke="#a01c24" stroke-width=".5"/></svg><div class="abs ui" style="left:75px;top:488px;color:#000;font-size:12px">装配</div><svg class="ico" style="left:189px;top:488px;width:11px;height:14px" viewBox="0 0 11 14"><path d="M6 1 C3.500 1.500 3 4 4.500 5.500 L1.500 11.500 C1 13 3 13.500 3.500 12.500 L6.500 6.500 C8.500 6.500 10 5 9.500 3 L7.500 4.500 L6 3.500Z" fill="#8aa8d8" stroke="#4a6aa8" stroke-width=".6"/></svg><div class="abs ui" style="left:242px;top:488px;font-size:13px">1</div><svg class="ico" style="left:84px;top:514px;width:27px;height:21px" viewBox="0 0 30 24"><text x="-.500" y="20.700" font-size="22" font-family="Liberation Sans,sans-serif" fill="#8a1c2c">U</text><text x="15.500" y="20.700" font-size="10" font-family="Liberation Sans,sans-serif" fill="#555">ser</text></svg><div class="abs ui" style="left:114px;top:517px;color:#000;font-size:13px">untitle</div><div class="abs" style="left:64px;top:518px;width:13px;height:13px;background:#0a5fc0;border-radius:2.500px"></div><svg class="abs" style="left:64px;top:518px;width:13px;height:13px" viewBox="0 0 13 13"><path d="M3 6.500 L5.500 9 L10 4" fill="none" stroke="#fff" stroke-width="1.200"/></svg>
<div class="abs" style="left:306px;top:147px;width:1571px;height:699px;background:#fff"></div><svg class="abs" style="left:306px;top:147px;width:1571px;height:699px" viewBox="306 147 1571 699"><defs><linearGradient id="side" x1="835" y1="0" x2="1296" y2="0" gradientUnits="userSpaceOnUse"><stop offset="0" stop-color="#767676"/><stop offset=".03" stop-color="#a2a2a2"/><stop offset=".075" stop-color="#cdcdcd"/><stop offset=".14" stop-color="#eeeeee"/><stop offset=".185" stop-color="#fff"/><stop offset=".82" stop-color="#fff"/><stop offset=".89" stop-color="#dedede"/><stop offset=".945" stop-color="#b0b0b0"/><stop offset=".99" stop-color="#747474"/><stop offset="1" stop-color="#666"/></linearGradient></defs><path d="M835.500 570.500 V642.500 A230 114.500 0 0 0 1295.500 642.500 V570.500Z" fill="url(#side)" stroke="#6a6a6a" stroke-width=".8"/><path d="M835.500 636 V642.500 A230 114.500 0 0 0 1295.500 642.500 V636" fill="none" stroke="#000" stroke-width="1.800"/><path d="M900 722 A230 114.500 0 0 0 1180 741.800" fill="none" stroke="#000" stroke-width="2.400"/><ellipse cx="1065.500" cy="570.500" rx="230" ry="114.500" fill="#fff" stroke="#000" stroke-width="1.300"/><ellipse cx="1065.500" cy="566.500" rx="225" ry="111.500" fill="#d9d9d9" stroke="#000" stroke-width="1.300"/><path d="M949 664 V739.500" stroke="#000" stroke-width="1.300"/><path d="M1065.700 501.400 L1181 534.700 L1180.300 601.700 L1064.400 632.700 L950 599.400 L950.700 532.500Z" fill="#fff" stroke="#000" stroke-width="1.300" stroke-linejoin="round"/><path d="M973.500 606 L1065.700 580.500 L1156.500 607.300 M1065.700 501.400 V580.500" fill="none" stroke="#000" stroke-width="1.300"/><path d="M1065.500 474 L1065 552" stroke="#000" stroke-width="2"/><path d="M1058.800 551 Q1065 548 1071.200 551 L1065 580Z" fill="#000"/><rect x="1059.700" y="708.300" width="6.500" height="6.500" fill="#fff" stroke="#000" stroke-width="1.500"/><path d="M1069 262 L1183.400 296.400 L1182 363.400 L1066.200 393.800 L952.100 359.800 L953.300 293.500Z" fill="#99e6e6" stroke="#000" stroke-width="1.300" stroke-linejoin="round"/><path d="M952.100 359.800 L1066.200 393.800 L1065.500 473.400 L951.400 439Z" fill="#c2ffff" stroke="#000" stroke-width="1.300" stroke-linejoin="round"/><path d="M1066.200 393.800 L1182 363.400 L1181.500 442 L1065.500 473.400Z" fill="#c2ffff" stroke="#000" stroke-width="1.300" stroke-linejoin="round"/><rect x="1062.200" y="470.200" width="6.600" height="6.600" fill="none" stroke="#e00000" stroke-width="1.600"/><path d="M1759.300 740.700 V696" stroke="#0000ff" stroke-width="1.300"/><path d="M1754.300 699.500 Q1759.300 702 1764.300 699.500 L1759.300 686.500Z" fill="#0000e8"/><path d="M1759.300 740.700 L1803 752.500" stroke="#00e000" stroke-width="1.300"/><path d="M1801.500 747.800 Q1799.500 753 1800.500 758 L1813 755.300Z" fill="#00d800"/><path d="M1759.300 740.700 L1735 762.500" stroke="#e00000" stroke-width="1.300"/><path d="M1732 758 Q1735.500 763 1739.500 765.500 L1725.500 768.500Z" fill="#d80000"/><g font-family="Liberation Sans,sans-serif" font-style="italic" font-size="14" fill="#000"><text x="1763.500" y="692">Z</text><text x="1808.500" y="747">Y</text><text x="1740" y="756">X</text></g></svg>
<div class="abs" style="left:338px;top:850px;width:804px;height:116px;background:#fff"></div><svg class="abs" style="left:309px;top:853px;width:10px;height:10px" viewBox="0 0 10 10"><path d="M1.500 1.500 L7.500 7.500 M7.500 1.500 L1.500 7.500" stroke="#223" stroke-width="1.300"/></svg><svg class="abs" style="left:310px;top:878px;width:22px;height:24px" viewBox="0 0 22 24"><ellipse cx="12" cy="20.500" rx="8" ry="2" fill="#d8d8d8"/><path d="M3 2 Q4.500 .500 6 2 L10 10 L7 11.500Z" fill="#d89a4a" stroke="#9a6a2a" stroke-width=".5"/><path d="M6 11 L11.500 8.500 L13 11 L7.500 13.500Z" fill="#e03030"/><path d="M7.500 13.500 L13 11 C17 13 19.500 16 20 18 L9 21.500 C8.500 18 8 16 7.500 13.500Z" fill="#f5d828" stroke="#c8a810" stroke-width=".5"/><path d="M10 14 L12 20 M13 13 L16 19" stroke="#d8b818" stroke-width=".6"/></svg><div class="abs ui" style="left:314px;top:934px;width:12px;line-height:15px;color:#444;white-space:normal;font-weight:300">信息</div><div class="abs ss" style="left:343px;top:853px;color:#00bf8a;white-space:pre"><b>&gt;&gt;</b></div><div class="abs ss" style="left:365px;top:853px;color:#00bf8a;white-space:pre">创建新文件!</div><div class="abs ss" style="left:343px;top:873px;color:#00bf8a;white-space:pre"><b>&gt;&gt;</b></div><div class="abs ss" style="left:365px;top:873px;color:#00bf8a;white-space:pre"><b>2024.05.06  13:17:12  </b>周一</div><div class="abs ss" style="left:343px;top:893px;color:#00bf8a;white-space:pre"><b>&gt;&gt;</b></div><div class="abs ss" style="left:365px;top:893px;color:#00bf8a;white-space:pre">打开文件<b>D:/1Work_haotian/model/</b>自定  义<b>/</b>多边形<b>.dtas3d</b></div><div class="abs ss" style="left:343px;top:913px;color:#00bf8a;white-space:pre"><b>&gt;&gt;</b></div><div class="abs ss" style="left:365px;top:913px;color:#00bf8a;white-space:pre">文件版本为<b>: 12.2.16  Beta!</b></div><div class="abs ss" style="left:343px;top:933px;color:#00bf8a;white-space:pre"><b>&gt;&gt;</b></div><div class="abs ss" style="left:365px;top:933px;color:#00bf8a;white-space:pre"><b>2024.05.06  13:17:12  </b>周一</div><div class="abs" style="left:1142px;top:850px;width:15px;height:116px;background:#f6f6f6"></div><div class="abs" style="left:1142px;top:850px;width:15px;height:16px;background:#f0f0f0;border:1px solid;border-color:#fff #696969 #696969 #fff;box-shadow:inset -1px -1px 0 #a0a0a0"></div><div class="abs" style="left:1145px;top:855px;width:0;height:0;border-left:4px solid transparent;border-right:4px solid transparent;border-bottom:4px solid #000"></div><div class="abs" style="left:1142px;top:898px;width:15px;height:48px;background:#f0f0f0;border:1px solid;border-color:#fff #696969 #696969 #fff;box-shadow:inset -1px -1px 0 #a0a0a0"></div><div class="abs" style="left:1142px;top:949px;width:15px;height:17px;background:#f0f0f0;border:1px solid;border-color:#fff #696969 #696969 #fff;box-shadow:inset -1px -1px 0 #a0a0a0"></div><div class="abs" style="left:1145px;top:955px;width:0;height:0;border-left:4px solid transparent;border-right:4px solid transparent;border-top:4px solid #000"></div><div class="abs" style="left:1863px;top:861px;width:1px;height:94px;background:#a0a0a0"></div><svg class="ico" style="left:1177px;top:871px;width:24px;height:24px" viewBox="0 0 24 24"><path d="M1 1.500 L20 .500 L23 2 V22 L20 23.500 H1Z" fill="#f8faf8" stroke="#8ad8a0" stroke-width=".8"/><path d="M6.500 12 Q11.500 6.500 17 12 Q11.500 16.500 6.500 12Z" fill="#12b432"/><circle cx="11.800" cy="11.800" r="1.800" fill="#111"/><circle cx="19" cy="19.500" r="4.300" fill="#fff" stroke="#5ac878" stroke-width=".8"/><path d="M19 17 V22 M16.500 19.500 H21.500" stroke="#5ac878" stroke-width=".9"/></svg><svg class="ico" style="left:1214px;top:871px;width:24px;height:24px" viewBox="0 0 24 24"><path d="M1 1.500 L20 .500 L23 2 V22 L20 23.500 H1Z" fill="#f8f8f8" stroke="#c0c0c0" stroke-width=".8"/><path d="M20 .500 L23 2 V22" fill="none" stroke="#a0c8a8" stroke-width=".9"/><path d="M6 10.500 Q12 15 18 10.500 M7.500 12 L6.500 14 M10 13 L9.500 15.200 M12.500 13.300 V15.500 M15 12.800 L15.800 15 M17 11.800 L18.300 13.500" fill="none" stroke="#222" stroke-width=".9"/><circle cx="19" cy="19.500" r="4.300" fill="#fff" stroke="#8ad8a0" stroke-width=".8"/><path d="M16.500 19.500 H21.500" stroke="#8ad8a0" stroke-width=".9"/></svg><div class="abs" style="left:1247px;top:868px;width:1px;height:30px;background:#c8c8c8"></div><svg class="ico" style="left:1257px;top:871px;width:24px;height:24px" viewBox="0 0 24 24"><rect x=".500" y=".500" width="23" height="23" rx="1" fill="#10d040" stroke="#0a9a2a" stroke-width=".5"/><path d="M12 .500 V23.500 M.500 12 H23.500" stroke="#a8c8a8" stroke-width="1.300"/></svg><svg class="ico" style="left:1294px;top:871px;width:24px;height:24px" viewBox="0 0 24 24"><g fill="none" stroke="#8ad8a0" stroke-width=".8"><rect x=".500" y=".500" width="10.500" height="10.500" rx="1"/><rect x="13" y=".500" width="10.500" height="10.500" rx="1"/><rect x=".500" y="13" width="10.500" height="10.500" rx="1"/><rect x="13" y="13" width="10.500" height="10.500" rx="1"/></g></svg><svg class="ico" style="left:1331px;top:871px;width:24px;height:24px" viewBox="0 0 24 24"><rect x=".500" y="1" width="10.500" height="10.500" rx="1" fill="#10d040"/><rect x="13" y="13" width="10.500" height="10.500" rx="1" fill="none" stroke="#8ad8a0" stroke-width=".8"/><path d="M13.500 5.500 L17 2 L17.300 4 C20.500 4 22.500 7 22 10 C21 7.500 19.500 7 17.500 7 L17.800 9Z" fill="#f8e4b0" stroke="#a89050" stroke-width=".5" stroke-linejoin="round"/><path d="M10.500 19 L7 22.500 L6.700 20.500 C3.500 20.500 1.500 17.500 2 14.500 C3 17 4.500 17.500 6.500 17.500 L6.200 15.500Z" fill="#f8e4b0" stroke="#a89050" stroke-width=".5" stroke-linejoin="round"/></svg><svg class="ico" style="left:1368px;top:871px;width:24px;height:24px" viewBox="0 0 24 24"><rect x=".500" y=".500" width="23" height="23" rx="1" fill="#10d040" stroke="#0a9a2a" stroke-width=".5"/><path d="M8.500 12 V9 C8.500 5.500 14 5 14.500 8" fill="none" stroke="#fff" stroke-width="1.400"/><rect x="7" y="12" width="10" height="8" rx="1" fill="#fff"/><circle cx="12" cy="15.300" r="1.200" fill="#10d040"/><rect x="11.400" y="15.500" width="1.200" height="2.800" fill="#10d040"/></svg><svg class="ico" style="left:1405px;top:871px;width:24px;height:24px" viewBox="0 0 24 24"><path d="M6 .500 H23.500 V23 H.500 V6Z" fill="#fff" stroke="#555" stroke-width=".8"/><path d="M6 .500 V6 H.500Z" fill="#10d040"/><path d="M1 23.500 H23.500" stroke="#7a9a80" stroke-width=".9"/><path d="M8.500 12 V9 C8.500 5.500 14 5 14.500 8" fill="none" stroke="#10d040" stroke-width="1.400"/><rect x="7" y="12" width="10" height="8" rx="1" fill="#10d040"/><circle cx="12" cy="15.300" r="1.200" fill="#063a10"/><rect x="11.400" y="15.500" width="1.200" height="2.800" fill="#063a10"/></svg><div class="abs" style="left:1438px;top:868px;width:1px;height:30px;background:#c8c8c8"></div><div class="abs" style="left:1442px;top:865px;width:37px;height:35px;background:#cce4f7;border:1px solid #99cdf5;border-radius:3px"></div><svg class="ico" style="left:1448px;top:871px;width:24px;height:24px" viewBox="0 0 24 24"><path d="M2.500 3.500 Q6.500 -.500 11 3.500 Q6.500 7 2.500 3.500Z" fill="#10c838" stroke="#0a8a20" stroke-width=".4"/><circle cx="6.800" cy="3.400" r="1.400" fill="#111"/><path d="M12 17 L20.5 8" stroke="#7fd498" stroke-width="6.400" stroke-linecap="round"/><path d="M12 17 L20.5 8" stroke="#fff" stroke-width="5.200" stroke-linecap="round"/><path d="M12 17 L20.5 8" stroke="#7fd498" stroke-width="2.300" stroke-linecap="round"/><path d="M12 17 L20.5 8" stroke="#cce4f7" stroke-width="1.200" stroke-linecap="round"/><path d="M15.500 12.500 L6.500 18 C3.500 20.500 6.500 24.500 10 22 L17.500 17.500" fill="none" stroke="#10d040" stroke-width="3" stroke-linecap="round" stroke-linejoin="round"/><path d="M8.700 7.500 L19.500 18" stroke="#f07a9a" stroke-width=".7"/></svg><svg class="ico" style="left:1484px;top:871px;width:24px;height:24px" viewBox="0 0 24 24"><path d="M2.500 3.500 Q6.500 -.500 11 3.500 Q6.500 7 2.500 3.500Z" fill="#10c838" stroke="#0a8a20" stroke-width=".4"/><circle cx="6.800" cy="3.400" r="1.400" fill="#111"/><path d="M15.5 11.5 L20.5 6.5" stroke="#7fd498" stroke-width="6.400" stroke-linecap="round"/><path d="M15.5 11.5 L20.5 6.5" stroke="#fff" stroke-width="5.200" stroke-linecap="round"/><path d="M15.5 11.5 L20.5 6.5" stroke="#7fd498" stroke-width="2.300" stroke-linecap="round"/><path d="M15.5 11.5 L20.5 6.5" stroke="#f0f0f0" stroke-width="1.200" stroke-linecap="round"/><path d="M12.500 10.500 C9 8 3.500 11.500 4 16 C4.500 21 10.500 21.500 13 18.500" fill="none" stroke="#10d040" stroke-width="3" stroke-linecap="round"/></svg><div class="abs" style="left:1518px;top:868px;width:1px;height:30px;background:#c8c8c8"></div><svg class="ico" style="left:1527px;top:871px;width:24px;height:24px" viewBox="0 0 24 24"><path d="M12 .500 L18 9.500 H6Z" fill="#fbe8a0" stroke="#0f6e7a" stroke-width=".6"/><path d="M12 .500 L14.500 9.500 H18Z" fill="#f0a820"/><path d="M12 .500 L14 9.500" stroke="#0f6e7a" stroke-width=".5"/><rect x="1.500" y="12" width="10" height="10.500" fill="#52f5e8" stroke="#0f6e7a" stroke-width=".6"/><circle cx="18.500" cy="17.500" r="5.300" fill="#14b0a8" stroke="#0f6e7a" stroke-width=".6"/></svg><svg class="ico" style="left:1564px;top:871px;width:24px;height:24px" viewBox="0 0 24 24"><circle cx="12" cy="4" r="3.800" fill="none" stroke="#a0d8b0" stroke-width=".9"/><path d="M12 -1 V9 M7 4 H17" stroke="#a0c8f0" stroke-width=".7"/><path d="M1 13.500 L5 11.500 L9.500 13.500 V21 L5 23 L1 21Z" fill="#5fa8ee" stroke="#2f5f9e" stroke-width=".6"/><rect x="3.300" y="14.500" width="4" height="7.500" fill="#f3c95c" stroke="#a37a20" stroke-width=".4"/><path d="M13.500 12.500 L24.500 23 H13.500Z" fill="#3de0e0" stroke="#0f7e8a" stroke-width=".8"/><path d="M15.800 17.800 L19.500 21 H15.800Z" fill="#f0f0f0" stroke="#0f7e8a" stroke-width=".6"/></svg><svg class="ico" style="left:1601px;top:871px;width:24px;height:24px" viewBox="0 0 24 24"><path d="M2 2 L23 23 H2Z" fill="#fff" stroke="#8a8a8a" stroke-width=".9"/><path d="M6 12 L14.500 20 H6Z" fill="#f0f0f0" stroke="#8a8a8a" stroke-width=".8"/><path d="M5 4 C9 -2 21 -1 24 8 C25 13 23 17 20 19 L8 6Z" fill="#b8b8b8" stroke="#8a8a8a" stroke-width=".7"/><path d="M11 6 C14 3 19 4.500 20.500 9 C21 12 20 14 18.500 15Z" fill="#f0f0f0" stroke="#8a8a8a" stroke-width=".6"/><circle cx="21" cy="4" r="3.600" fill="#fff" stroke="#999" stroke-width=".5"/><path d="M19.300 2.300 L22.700 5.700 M22.700 2.300 L19.300 5.700" stroke="#a8242c" stroke-width="1.100"/></svg><svg class="ico" style="left:1638px;top:871px;width:24px;height:24px" viewBox="0 0 24 24"><circle cx="12" cy="12" r="8.500" fill="none" stroke="#a0d8b0" stroke-width="2.200"/><circle cx="12" cy="12" r="9.800" fill="none" stroke="#7ac890" stroke-width=".4"/><circle cx="12" cy="12" r="7.200" fill="none" stroke="#7ac890" stroke-width=".4"/><path d="M12 -1 V25 M-1 12 H25" stroke="#a8d0f8" stroke-width=".9"/></svg><svg class="ico" style="left:1675px;top:871px;width:24px;height:24px" viewBox="0 0 24 24"><g fill="#f8f8f8" stroke="#8a8a8a" stroke-width=".7"><rect x="2.500" y="1" width="3.500" height="17"/><rect x="9.500" y="5" width="3.500" height="13"/><rect x="17" y="10.500" width="3.500" height="7.500"/><rect x="2.500" y="20.500" width="18" height="2.500" fill="#d0d0d0"/></g><circle cx="19" cy="5" r="3.800" fill="#fff" stroke="#999" stroke-width=".5"/><path d="M17.300 3.300 L20.700 6.700 M20.700 3.300 L17.300 6.700" stroke="#a8242c" stroke-width="1.100"/></svg><svg class="ico" style="left:1711px;top:869px;width:28px;height:28px" viewBox="0 0 28 28"><rect x="1.200" y="1.200" width="25.600" height="25.600" rx="1.500" fill="#d8f0e8" stroke="#8ad8c0" stroke-width="2.200"/><path d="M1 5 L23 27 M1 14 L14 27 M23 1 L27 5" stroke="#8ad8c0" stroke-width="2.600"/><text x="16.500" y="15.500" font-size="11" font-family="Liberation Sans,sans-serif" fill="#8ad8c0" text-anchor="middle">T</text></svg><svg class="ico" style="left:1177px;top:919px;width:24px;height:24px" viewBox="0 0 24 24"><path d="M12 1 V23 M1 12 H23" stroke="#f09070" stroke-width="1.300"/><path d="M12 -.500 L14.500 3 H9.500Z M12 24.500 L14.500 21 H9.500Z M-.500 12 L3 9.500 V14.500Z M24.500 12 L21 9.500 V14.500Z" fill="#f09070" stroke="#c8603a" stroke-width=".5"/><path d="M7 9 L8.500 7.500 H17 V15.500 L15.500 17 H7Z" fill="#f8c850" stroke="#a07818" stroke-width=".6"/><path d="M7 9 H15.500 V17 M15.500 9 L17 7.500" fill="none" stroke="#a07818" stroke-width=".5"/></svg><svg class="ico" style="left:1214px;top:919px;width:24px;height:24px" viewBox="0 0 24 24"><path d="M12 .500 V4 M1 19.500 L3 18.500 M23 19.500 L21 18.500" stroke="#222" stroke-width=".7"/><circle cx="12" cy=".800" r=".8" fill="#111"/><circle cx="1" cy="19.800" r=".8" fill="#111"/><circle cx="23" cy="19.800" r=".8" fill="#111"/><path d="M12 3.500 L21 8 V18 L12 22.500 L3 18 V8Z" fill="#f8c0a8" stroke="#c8501a" stroke-width=".6"/><path d="M12 12.500 L21 8 V18 L12 22.500Z" fill="#e8581a"/><path d="M12 3.500 L21 8 L12 12.500 L3 8Z" fill="#f0906a"/><path d="M3 8 L12 12.500 L21 8 M12 12.500 V22.500 M3 18 L12 13.500 L21 18" fill="none" stroke="#c8501a" stroke-width=".5"/></svg><svg class="ico" style="left:1251px;top:919px;width:24px;height:24px" viewBox="0 0 24 24"><path d="M7.500 .500 V7 M1 24 L5 21 M24 19.500 L21.500 19.500" stroke="#222" stroke-width=".7"/><circle cx="7.500" cy=".800" r=".7" fill="#111"/><circle cx="1" cy="24" r=".8" fill="#111"/><circle cx="24" cy="19.500" r=".8" fill="#111"/><path d="M4.500 9 L8 5.500 H21.500 L18 9Z" fill="#f8c850" stroke="#a07818" stroke-width=".5"/><path d="M18 9 L21.500 5.500 V19.500 L18 23Z" fill="#f0a830" stroke="#a07818" stroke-width=".5"/><rect x="4.500" y="9" width="13.500" height="14" fill="#f8c850" stroke="#a07818" stroke-width=".6"/><path d="M4.500 23 L8 19.500 H21.500 L18 23Z" fill="#e8581a" stroke="#a07818" stroke-width=".5"/><path d="M8 5.500 V19.500 H21.500 M8 19.500 L4.500 23" fill="none" stroke="#a07818" stroke-width=".4"/></svg><svg class="ico" style="left:1288px;top:919px;width:24px;height:24px" viewBox="0 0 24 24"><path d="M7.500 .500 V7 M1 24 L5 21 M24 19.500 L21.500 19.500" stroke="#222" stroke-width=".7"/><circle cx="7.500" cy=".800" r=".7" fill="#111"/><circle cx="1" cy="24" r=".8" fill="#111"/><circle cx="24" cy="19.500" r=".8" fill="#111"/><path d="M4.500 9 L8 5.500 H21.500 L18 9Z" fill="#e8581a" stroke="#a07818" stroke-width=".5"/><path d="M18 9 L21.500 5.500 V19.500 L18 23Z" fill="#f0a830" stroke="#a07818" stroke-width=".5"/><rect x="4.500" y="9" width="13.500" height="14" fill="#f8c850" stroke="#a07818" stroke-width=".6"/><path d="M8 5.500 V19.500 H21.500 M8 19.500 L4.500 23" fill="none" stroke="#a07818" stroke-width=".4"/></svg><svg class="ico" style="left:1325px;top:919px;width:24px;height:24px" viewBox="0 0 24 24"><path d="M7.500 .500 V7 M1 24 L5 21 M24 19.500 L21.500 19.500" stroke="#222" stroke-width=".7"/><circle cx="7.500" cy=".800" r=".7" fill="#111"/><circle cx="1" cy="24" r=".8" fill="#111"/><circle cx="24" cy="19.500" r=".8" fill="#111"/><path d="M4.500 9 L8 5.500 H21.500 L18 9Z" fill="#f8c850" stroke="#a07818" stroke-width=".5"/><path d="M18 9 L21.500 5.500 V19.500 L18 23Z" fill="#f0a830" stroke="#a07818" stroke-width=".5"/><rect x="4.500" y="9" width="13.500" height="14" fill="#f8c850" stroke="#a07818" stroke-width=".6"/><path d="M4.500 9 L8 5.500 V19.500 L4.500 23Z" fill="#e8681a" stroke="#a07818" stroke-width=".5"/><path d="M8 5.500 V19.500 H21.500 M8 19.500 L4.500 23" fill="none" stroke="#a07818" stroke-width=".4"/></svg><svg class="ico" style="left:1362px;top:919px;width:24px;height:24px" viewBox="0 0 24 24"><path d="M7.500 .500 V7 M1 24 L5 21 M24 19.500 L21.500 19.500" stroke="#222" stroke-width=".7"/><circle cx="7.500" cy=".800" r=".7" fill="#111"/><circle cx="1" cy="24" r=".8" fill="#111"/><circle cx="24" cy="19.500" r=".8" fill="#111"/><path d="M4.500 9 L8 5.500 H21.500 L18 9Z" fill="#f8c850" stroke="#a07818" stroke-width=".5"/><path d="M18 9 L21.500 5.500 V19.500 L18 23Z" fill="#e8581a" stroke="#a07818" stroke-width=".5"/><rect x="4.500" y="9" width="13.500" height="14" fill="#f8c850" stroke="#a07818" stroke-width=".6"/><path d="M8 5.500 V19.500 H21.500 M8 19.500 L4.500 23" fill="none" stroke="#a07818" stroke-width=".4"/></svg><svg class="ico" style="left:1399px;top:919px;width:24px;height:24px" viewBox="0 0 24 24"><path d="M7.500 .500 V7 M1 24 L5 21 M24 19.500 L21.500 19.500" stroke="#222" stroke-width=".7"/><circle cx="7.500" cy=".800" r=".7" fill="#111"/><circle cx="1" cy="24" r=".8" fill="#111"/><circle cx="24" cy="19.500" r=".8" fill="#111"/><path d="M4.500 9 L8 5.500 H21.500 L18 9Z" fill="#f0a040" stroke="#a07818" stroke-width=".5"/><path d="M18 9 L21.500 5.500 V19.500 L18 23Z" fill="#f0a830" stroke="#a07818" stroke-width=".5"/><rect x="4.500" y="9" width="13.500" height="14" fill="#ec6c2a" stroke="#a07818" stroke-width=".6"/><path d="M8 5.500 V19.500 H21.500 M8 19.500 L4.500 23" fill="none" stroke="#a07818" stroke-width=".4"/></svg><svg class="ico" style="left:1436px;top:919px;width:24px;height:24px" viewBox="0 0 24 24"><path d="M7.500 .500 V7 M1 24 L5 21 M24 19.500 L21.500 19.500" stroke="#222" stroke-width=".7"/><circle cx="7.500" cy=".800" r=".7" fill="#111"/><circle cx="1" cy="24" r=".8" fill="#111"/><circle cx="24" cy="19.500" r=".8" fill="#111"/><rect x="8" y="5.500" width="13.500" height="14" fill="#e8681a"/><path d="M4.500 9 L8 5.500 H21.500 L18 9Z" fill="#f8c850" stroke="#a07818" stroke-width=".5"/><path d="M18 9 L21.500 5.500 V19.500 L18 23Z" fill="#f0a830" stroke="#a07818" stroke-width=".5"/><rect x="4.500" y="9" width="13.500" height="14" fill="#f8c85088" stroke="#a07818" stroke-width=".6"/><path d="M8 5.500 V19.500 H21.500 M8 19.500 L4.500 23" fill="none" stroke="#a07818" stroke-width=".4"/></svg><svg class="ico" style="left:1473px;top:919px;width:24px;height:24px" viewBox="0 0 24 24"><path d="M5 8 H24.500 L20 22.500 H0Z" fill="#f2744a" stroke="#c8501a" stroke-width=".6"/><path d="M12 1 V15" stroke="#222" stroke-width=".8"/><rect x="11.300" y=".500" width="1.500" height="1.500" fill="#111"/><ellipse cx="12" cy="15.300" rx="1.600" ry="1" fill="#f8c850" stroke="#c8501a" stroke-width=".5"/></svg><svg class="ico" style="left:1510px;top:919px;width:24px;height:24px" viewBox="0 0 24 24"><g><path d="M17 3 C9 -1 1 5 2 13 C3 21 12 25 19 20" fill="none" stroke="#e8a878" stroke-width="2.200"/><path d="M17 3 C9 -1 1 5 2 13 C3 21 12 25 19 20" fill="none" stroke="#fbe8d8" stroke-width=".9"/><path d="M15 1 L21 2.500 L17.500 6.500Z" fill="#f0b080" stroke="#c8783a" stroke-width=".4"/><path d="M7.500 9 L12 7 L17 9 V15.500 L12 18 L7.500 15.500Z" fill="#f5e0a0" stroke="#a08a40" stroke-width=".5"/><path d="M12 11 L17 9 V15.500 L12 18Z" fill="#e8681a"/><path d="M7.500 9 L12 11 L17 9" fill="none" stroke="#a08a40" stroke-width=".4"/></g></svg><svg class="ico" style="left:1547px;top:919px;width:24px;height:24px" viewBox="0 0 24 24"><g transform="translate(24 0) scale(-1 1)"><path d="M17 3 C9 -1 1 5 2 13 C3 21 12 25 19 20" fill="none" stroke="#e8a878" stroke-width="2.200"/><path d="M17 3 C9 -1 1 5 2 13 C3 21 12 25 19 20" fill="none" stroke="#fbe8d8" stroke-width=".9"/><path d="M15 1 L21 2.500 L17.500 6.500Z" fill="#f0b080" stroke="#c8783a" stroke-width=".4"/><path d="M7.500 9 L12 7 L17 9 V15.500 L12 18 L7.500 15.500Z" fill="#f5e0a0" stroke="#a08a40" stroke-width=".5"/><path d="M12 11 L17 9 V15.500 L12 18Z" fill="#e8681a"/><path d="M7.500 9 L12 11 L17 9" fill="none" stroke="#a08a40" stroke-width=".4"/></g></svg><svg class="ico" style="left:1584px;top:919px;width:24px;height:24px" viewBox="0 0 24 24"><path d="M1 5 L6.500 1 H23 L18 5Z" fill="#f59a6a" stroke="#8a3a10" stroke-width=".6"/><path d="M18 5 L23 1 V18.500 L18 23Z" fill="#e05a1a" stroke="#8a3a10" stroke-width=".6"/><rect x="1" y="5" width="17" height="18" fill="#f27a3a" stroke="#8a3a10" stroke-width=".7"/><path d="M6.500 1 V18.500 H23 M6.500 18.500 L1 23" fill="none" stroke="#c05018" stroke-width=".5"/></svg><svg class="ico" style="left:1621px;top:919px;width:24px;height:24px" viewBox="0 0 24 24"><path d="M1 5 L6.500 1 H23 L18 5Z M18 5 L23 1 V18.500 L18 23Z M1 5 H18 V23 H1Z M6.500 1 V18.500 H23 M6.500 18.500 L1 23" fill="#f8f0ea" fill-opacity=".5" stroke="#f08a60" stroke-width=".8"/></svg><svg class="ico" style="left:1658px;top:919px;width:24px;height:24px" viewBox="0 0 24 24"><path d="M1 5 L6.500 1 H23 L18 5Z" fill="#f8a880"/><path d="M18 5 L23 1 V18.500 L18 23Z" fill="#ec6a36"/><rect x="1" y="5" width="17" height="18" fill="#f87848"/></svg><div class="abs ss" style="left:43px;top:985px;color:#008486">当前所框选的特征个数为<b>0</b></div>
<div class="abs" style="left:317px;top:202px;width:369px;height:563px;background:#f0f0f0;border:1px solid #b0b0b0;border-radius:8px;box-shadow:0 22px 44px rgba(0,0,0,.34),0 2px 22px rgba(0,0,0,.16);overflow:hidden"><div style="height:30px;background:linear-gradient(90deg,#f6f0ee,#f1f2f6 40%,#f3f3f5)"></div></div><svg class="abs" style="left:326px;top:209px;width:16px;height:16px" viewBox="0 0 16 16"><defs><linearGradient id="dg" x1="0" y1="0" x2="0" y2="1"><stop offset="0" stop-color="#1ea0f0"/><stop offset="1" stop-color="#3a68e0"/></linearGradient></defs><rect width="16" height="16" rx="2.500" fill="url(#dg)"/><circle cx="7.300" cy="8" r="3.300" fill="none" stroke="#fff" stroke-width="1.300"/><path d="M7.300 3 V13.500 M2 8 H14.500" stroke="#fff" stroke-width="1.300"/><path d="M.8 8 L4 6 V10Z M7.300 15 L5.500 12.500 H9.100Z" fill="#fff"/></svg><div class="abs ui" style="left:348px;top:210px;color:#222">点特征-O1</div><svg class="abs" style="left:664px;top:211px;width:12px;height:12px" viewBox="0 0 12 12"><path d="M1 1 L11 11 M11 1 L1 11" stroke="#222" stroke-width="1.100"/></svg><div class="abs" style="left:332px;top:250px;width:175px;height:28px;border:3px solid #f8261a;border-radius:4px"></div><div class="abs ss" style="left:339px;top:259px">名称<b>:</b></div><div class="inp ss" style="left:375px;top:255px;width:130px"><b>O1</b></div><div class="abs ss" style="left:512px;top:259px">生成方式<b>:</b></div><div class="inp ss" style="left:578px;top:255px;width:86px;border-color:#d0d0d0;background:#fff">自由选择</div><div class="abs" style="left:650px;top:262px;width:0;height:0;border-left:4px solid transparent;border-right:4px solid transparent;border-top:4px solid #111"></div><div class="grp" style="left:339px;top:286px;width:325px;height:97px"><span class="ss">所属零件</span></div><div class="abs ss" style="left:349px;top:311px">零件<b>:</b></div><div class="inp ss" style="left:385px;top:307px;width:145px">多边形</div><div class="btn ss" style="left:536px;top:305px;width:118px;height:22px">重选特征所在零件</div><div class="abs ss" style="left:349px;top:348px">特征集<b>:</b></div><div class="inp ss" style="left:397px;top:344px;width:169px"><b></b></div><div class="btn ss" style="left:572px;top:342px;width:82px;height:22px">选择特征集</div><div class="grp" style="left:339px;top:395px;width:325px;height:96px"><span class="ss">点坐标</span></div><div class="abs ss" style="left:349px;top:419px"><b>x:</b></div><div class="inp ss" style="left:367px;top:415px;width:80px"><b>25.000</b></div><div class="abs ss" style="left:453px;top:419px"><b>y:</b></div><div class="inp ss" style="left:471px;top:415px;width:80px"><b>14.434</b></div><div class="abs ss" style="left:557px;top:419px"><b>z:</b></div><div class="inp ss" style="left:574px;top:415px;width:80px"><b>60.000</b></div><div class="btn ss" style="left:349px;top:449px;width:150px;height:22px"><b>Same As</b></div><div class="btn ss" style="left:505px;top:449px;width:149px;height:22px"><b>Pick</b></div><div class="grp" style="left:339px;top:504px;width:325px;height:96px"><span class="ss">特征方向</span></div><div class="abs ss" style="left:349px;top:528px"><b>x:</b></div><div class="inp ss" style="left:367px;top:524px;width:80px"><b>0.00000000</b></div><div class="abs ss" style="left:453px;top:528px"><b>y:</b></div><div class="inp ss" style="left:471px;top:524px;width:80px"><b>0.00000000</b></div><div class="abs ss" style="left:557px;top:528px"><b>z:</b></div><div class="inp ss" style="left:574px;top:524px;width:80px"><b>-1.00000000</b></div><div class="btn ss" style="left:349px;top:558px;width:98px;height:22px">反向</div><div class="btn ss" style="left:453px;top:558px;width:97px;height:22px"><b>Same As</b></div><div class="btn ss" style="left:556px;top:558px;width:98px;height:22px"><b>Pick</b></div><div class="grp" style="left:339px;top:613px;width:325px;height:96px"><span class="ss">局部坐标系</span></div><div class="abs ss" style="left:349px;top:628px"><b>X</b>轴<b>:</b></div><div class="inp ss" style="left:379px;top:624px;width:88px"><b>1.00000000</b></div><div class="inp ss" style="left:473px;top:624px;width:88px"><b>0.00000000</b></div><div class="inp ss" style="left:566px;top:624px;width:88px"><b>0.00000000</b></div><div class="abs ss" style="left:349px;top:654px"><b>Y</b>轴<b>:</b></div><div class="inp ss" style="left:379px;top:650px;width:88px"><b>0.00000000</b></div><div class="inp ss" style="left:473px;top:650px;width:88px"><b>-1.00000000</b></div><div class="inp ss" style="left:566px;top:650px;width:88px"><b>0.00000000</b></div><div class="abs ss" style="left:349px;top:680px"><b>Z</b>轴<b>:</b></div><div class="inp ss" style="left:379px;top:676px;width:88px"><b>0.00000000</b></div><div class="inp ss" style="left:473px;top:676px;width:88px"><b>0.00000000</b></div><div class="inp ss" style="left:566px;top:676px;width:88px"><b>-1.00000000</b></div><div class="abs" style="left:478px;top:715px;width:90px;height:28px;background:#f3f3f3;border:1px solid #c9a880;border-radius:4px;box-shadow:0 1px 0 #b8a890"></div><svg class="abs" style="left:494px;top:722px;width:14px;height:14px" viewBox="0 0 14 14"><circle cx="7" cy="7" r="6.500" fill="#5cb82a" stroke="#3a8a14" stroke-width=".6"/><path d="M3.500 7 L6 9.500 L10.500 4.500" fill="none" stroke="#fff" stroke-width="1.800"/></svg><div class="abs" style="left:514px;top:717px;font-family:'Liberation Serif','Noto Serif CJK SC',serif;font-size:18px;font-weight:600;line-height:24px;letter-spacing:1px;color:#222">确定</div><div class="abs" style="left:574px;top:715px;width:90px;height:28px;background:#f3f3f3;border:1px solid #c9a880;border-radius:4px;box-shadow:0 1px 0 #b8a890"></div><svg class="abs" style="left:590px;top:722px;width:14px;height:14px" viewBox="0 0 14 14"><circle cx="7" cy="7" r="6.500" fill="#e03820" stroke="#a01c10" stroke-width=".6"/><path d="M4.500 4.500 L9.500 9.500 M9.500 4.500 L4.500 9.500" stroke="#fff" stroke-width="2"/></svg><div class="abs" style="left:610px;top:717px;font-family:'Liberation Serif','Noto Serif CJK SC',serif;font-size:18px;font-weight:600;line-height:24px;letter-spacing:1px;color:#222">取消</div>
</body></html>
